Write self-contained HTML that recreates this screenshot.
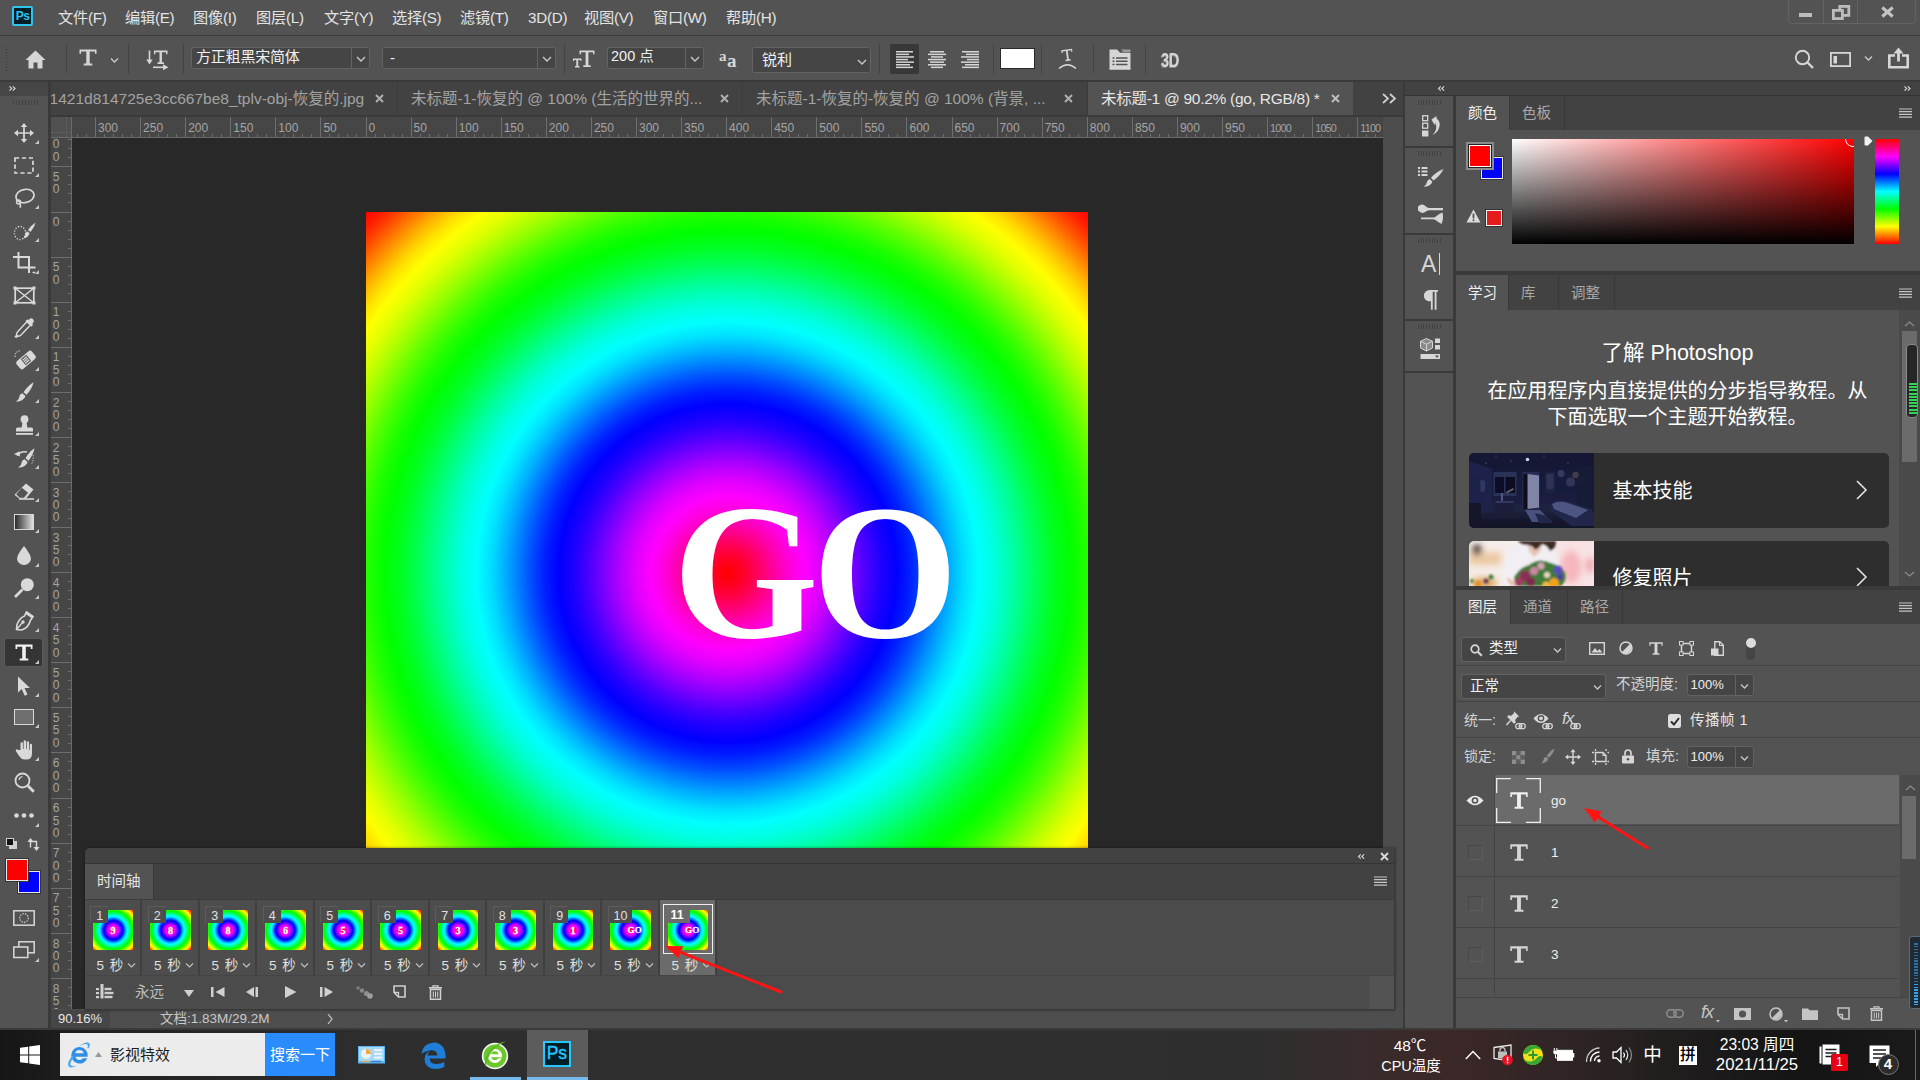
<!DOCTYPE html>
<html lang="zh-CN"><head><meta charset="utf-8"><title>Photoshop</title>
<style>
html,body{margin:0;padding:0;}
body{width:1920px;height:1080px;position:relative;overflow:hidden;background:#535353;
 font-family:"Liberation Sans","Noto Sans CJK SC",sans-serif;font-size:15px;color:#ddd;}
body div,body svg,body span.a{position:absolute;box-sizing:border-box;}
.t{white-space:nowrap;}
svg{overflow:visible;}
</style></head>
<body>
<!-- p_top -->
<div style="left:0px;top:0px;width:1920px;height:35px;background:#535353;"></div>
<div style="left:0px;top:35px;width:1920px;height:1px;background:#3d3d3d;"></div>
<div style="left:12px;top:6px;width:21px;height:20px;background:#001e26;border:2px solid #2fc3ee;border-radius:2px;"><div class="t" style="left:0;top:0;width:17px;height:16px;line-height:16px;text-align:center;font-size:12px;font-weight:bold;color:#2fc3ee;letter-spacing:-0.5px">Ps</div></div>
<div class="t" style="left:58px;top:6.5px;font-size:15.2px;line-height:21px;color:#e4e4e4;letter-spacing:-0.25px;">文件(F)</div>
<div class="t" style="left:125px;top:6.5px;font-size:15.2px;line-height:21px;color:#e4e4e4;letter-spacing:-0.25px;">编辑(E)</div>
<div class="t" style="left:193px;top:6.5px;font-size:15.2px;line-height:21px;color:#e4e4e4;letter-spacing:-0.25px;">图像(I)</div>
<div class="t" style="left:256px;top:6.5px;font-size:15.2px;line-height:21px;color:#e4e4e4;letter-spacing:-0.25px;">图层(L)</div>
<div class="t" style="left:324px;top:6.5px;font-size:15.2px;line-height:21px;color:#e4e4e4;letter-spacing:-0.25px;">文字(Y)</div>
<div class="t" style="left:392px;top:6.5px;font-size:15.2px;line-height:21px;color:#e4e4e4;letter-spacing:-0.25px;">选择(S)</div>
<div class="t" style="left:460px;top:6.5px;font-size:15.2px;line-height:21px;color:#e4e4e4;letter-spacing:-0.25px;">滤镜(T)</div>
<div class="t" style="left:528px;top:6.5px;font-size:15.2px;line-height:21px;color:#e4e4e4;letter-spacing:-0.25px;">3D(D)</div>
<div class="t" style="left:584px;top:6.5px;font-size:15.2px;line-height:21px;color:#e4e4e4;letter-spacing:-0.25px;">视图(V)</div>
<div class="t" style="left:653px;top:6.5px;font-size:15.2px;line-height:21px;color:#e4e4e4;letter-spacing:-0.25px;">窗口(W)</div>
<div class="t" style="left:726px;top:6.5px;font-size:15.2px;line-height:21px;color:#e4e4e4;letter-spacing:-0.25px;">帮助(H)</div>
<div style="left:1788px;top:-2px;width:128px;height:26px;border:1px solid #636363;border-radius:0 0 4px 4px;"></div>
<div style="left:1823px;top:0px;width:1px;height:23px;background:#636363;"></div>
<div style="left:1857px;top:0px;width:1px;height:23px;background:#636363;"></div>
<div style="left:1799px;top:13px;width:13px;height:4px;background:#bcbcbc;"></div>
<svg style="left:1832px;top:5px;" width="18" height="15" viewBox="0 0 18 15"><rect x="7.800" y="1.400" width="9" height="9" fill="none" stroke="#bcbcbc" stroke-width="2.800"/><rect x="1.400" y="5.400" width="9" height="8.200" fill="#535353" stroke="#bcbcbc" stroke-width="2.800"/></svg>
<svg style="left:1881px;top:7px;" width="13" height="10" viewBox="0 0 13 10"><path d="M1.300 0.500l10.400 9M11.700 0.500l-10.400 9" stroke="#c4c4c4" stroke-width="3"/></svg>
<div style="left:0px;top:36px;width:1920px;height:44px;background:#535353;"></div>
<div style="left:0px;top:80px;width:1920px;height:2px;background:#3a3a3a;"></div>
<!-- p_opt -->
<div style="left:6px;top:46px;width:1px;height:1px;background:#3a3a3a;"></div>
<div style="left:6px;top:49px;width:1px;height:1px;background:#3a3a3a;"></div>
<div style="left:6px;top:52px;width:1px;height:1px;background:#3a3a3a;"></div>
<div style="left:6px;top:55px;width:1px;height:1px;background:#3a3a3a;"></div>
<div style="left:6px;top:58px;width:1px;height:1px;background:#3a3a3a;"></div>
<div style="left:6px;top:61px;width:1px;height:1px;background:#3a3a3a;"></div>
<div style="left:6px;top:64px;width:1px;height:1px;background:#3a3a3a;"></div>
<div style="left:6px;top:67px;width:1px;height:1px;background:#3a3a3a;"></div>
<div style="left:6px;top:70px;width:1px;height:1px;background:#3a3a3a;"></div>
<svg style="left:25px;top:50px;" width="21" height="19" viewBox="0 0 21 19"><path d="M10.5 0.5L0.5 10h3v8.5h5v-6h4v6h5V10h3z" fill="#d6d6d6"/></svg>
<div style="left:66px;top:44px;width:1px;height:30px;background:#434343;"></div>
<svg style="left:79px;top:49px;" width="18" height="17" viewBox="0 0 18 17"><path d="M0.5 0.5h17v4.3h-1.6v-2.2h-5.2v11.9h2.6v1.9h-8.6v-1.9h2.6V2.6H2.1v2.2H0.5z" fill="#d6d6d6"/></svg>
<svg style="left:109.5px;top:56.5px;" width="9.0" height="7.0" viewBox="0 0 9.0 7.0"><path d="M1 1.5l3.5 3.5l3.5 -3.5" fill="none" stroke="#c8c8c8" stroke-width="1.4"/></svg>
<div style="left:128px;top:44px;width:1px;height:30px;background:#434343;"></div>
<svg style="left:146px;top:50px;" width="23" height="20" viewBox="0 0 23 20"><path d="M3.500 0.500v12" stroke="#d6d6d6" stroke-width="1.600"/><path d="M0.300 9.500l3.200 5l3.200-5z" fill="#d6d6d6"/><path d="M8 0.500h13.500v3.800h-1.400v-2h-4.200v10h2v1.600h-6.400v-1.600h2v-10h-4.200v2H8z" fill="#d6d6d6"/><path d="M7 17.300h11" stroke="#d6d6d6" stroke-width="1.600"/><path d="M17 14.300l5.500 3l-5.500 3z" fill="#d6d6d6"/></svg>
<div style="left:183px;top:44px;width:1px;height:30px;background:#434343;"></div>
<div style="left:191px;top:47px;width:179px;height:22px;background:#454545;border:1px solid #636363;border-radius:3px;"></div>
<div style="left:351px;top:48px;width:1px;height:20px;background:#636363;"></div>
<svg style="left:355.5px;top:55.0px;" width="10" height="8" viewBox="0 0 10 8"><path d="M1 2l4 4l4 -4" fill="none" stroke="#c8c8c8" stroke-width="1.4"/></svg>
<div class="t" style="left:196px;top:45.8px;font-size:15px;line-height:21px;color:#f0f0f0;letter-spacing:-0.200px;">方正粗黑宋简体</div>
<div style="left:382px;top:47px;width:174px;height:22px;background:#454545;border:1px solid #636363;border-radius:3px;"></div>
<div style="left:537px;top:48px;width:1px;height:20px;background:#636363;"></div>
<svg style="left:541.5px;top:55.0px;" width="10" height="8" viewBox="0 0 10 8"><path d="M1 2l4 4l4 -4" fill="none" stroke="#c8c8c8" stroke-width="1.4"/></svg>
<div class="t" style="left:390px;top:46.5px;font-size:15px;line-height:21px;color:#f0f0f0;">-</div>
<div style="left:564px;top:44px;width:1px;height:30px;background:#434343;"></div>
<svg style="left:573px;top:50px;" width="22" height="18" viewBox="0 0 22 18"><path d="M6.5 0.5h15v3.8h-1.5v-2h-4.6v12.9h2.3v1.8h-7.4v-1.8h2.3V2.3H8v2H6.5z" fill="#d6d6d6"/><path d="M0 8.5h8.5v2.6h-1.1v-1.2H5.2v6.2h1.3V17.5H2v-1.4h1.3V9.9H1.1v1.2H0z" fill="#d6d6d6"/></svg>
<div style="left:607px;top:47px;width:97px;height:22px;background:#454545;border:1px solid #636363;border-radius:3px;"></div>
<div style="left:685px;top:48px;width:1px;height:20px;background:#636363;"></div>
<svg style="left:689.5px;top:55.0px;" width="10" height="8" viewBox="0 0 10 8"><path d="M1 2l4 4l4 -4" fill="none" stroke="#c8c8c8" stroke-width="1.4"/></svg>
<div class="t" style="left:611px;top:46.3px;font-size:14.5px;line-height:20px;color:#f0f0f0;">200 点</div>
<div class="t" style="left:719px;top:45.5px;font-size:15px;line-height:21px;color:#d6d6d6;font-family:'Liberation Serif',serif;font-weight:bold;">a</div>
<div class="t" style="left:727px;top:46.5px;font-size:19px;line-height:27px;color:#d6d6d6;font-family:'Liberation Serif',serif;font-weight:bold;">a</div>
<div style="left:752px;top:47px;width:119px;height:26px;background:#454545;border:1px solid #636363;border-radius:3px;"></div>
<div class="t" style="left:762px;top:48.5px;font-size:15px;line-height:21px;color:#f0f0f0;">锐利</div>
<svg style="left:857px;top:58px;" width="10" height="8" viewBox="0 0 10 8"><path d="M1 2l4 4l4 -4" fill="none" stroke="#c8c8c8" stroke-width="1.4"/></svg>
<div style="left:879px;top:44px;width:1px;height:30px;background:#434343;"></div>
<div style="left:890px;top:44px;width:29px;height:30px;background:#383838;border-radius:2px;"></div>
<svg style="left:896px;top:51px;" width="18" height="20" viewBox="0 0 18 20"><rect x="0" y="0.0" width="17" height="1.500" fill="#d6d6d6"/><rect x="0" y="2.6" width="13" height="1.500" fill="#d6d6d6"/><rect x="0" y="5.2" width="18" height="1.500" fill="#d6d6d6"/><rect x="0" y="7.800000000000001" width="12" height="1.500" fill="#d6d6d6"/><rect x="0" y="10.4" width="18" height="1.500" fill="#d6d6d6"/><rect x="0" y="13.0" width="14" height="1.500" fill="#d6d6d6"/><rect x="0" y="15.600000000000001" width="17" height="1.500" fill="#d6d6d6"/></svg>
<svg style="left:928px;top:51px;" width="18" height="20" viewBox="0 0 18 20"><rect x="2.0" y="0.0" width="14" height="1.500" fill="#d6d6d6"/><rect x="0.0" y="2.6" width="18" height="1.500" fill="#d6d6d6"/><rect x="3.0" y="5.2" width="12" height="1.500" fill="#d6d6d6"/><rect x="0.0" y="7.800000000000001" width="18" height="1.500" fill="#d6d6d6"/><rect x="2.0" y="10.4" width="14" height="1.500" fill="#d6d6d6"/><rect x="0.0" y="13.0" width="18" height="1.500" fill="#d6d6d6"/><rect x="3.0" y="15.600000000000001" width="12" height="1.500" fill="#d6d6d6"/></svg>
<svg style="left:961px;top:51px;" width="18" height="20" viewBox="0 0 18 20"><rect x="1" y="0.0" width="17" height="1.500" fill="#d6d6d6"/><rect x="5" y="2.6" width="13" height="1.500" fill="#d6d6d6"/><rect x="0" y="5.2" width="18" height="1.500" fill="#d6d6d6"/><rect x="6" y="7.800000000000001" width="12" height="1.500" fill="#d6d6d6"/><rect x="0" y="10.4" width="18" height="1.500" fill="#d6d6d6"/><rect x="4" y="13.0" width="14" height="1.500" fill="#d6d6d6"/><rect x="1" y="15.600000000000001" width="17" height="1.500" fill="#d6d6d6"/></svg>
<div style="left:993px;top:44px;width:1px;height:30px;background:#434343;"></div>
<div style="left:1000px;top:48px;width:35px;height:21px;background:#ffffff;border:1px solid #2a2a2a;"></div>
<div style="left:1041px;top:44px;width:1px;height:30px;background:#434343;"></div>
<svg style="left:1058px;top:48px;" width="19" height="22" viewBox="0 0 19 22"><g transform="rotate(-8 9.500 8)"><path d="M4 1.500h11v2.800h-1.200v-1.400h-3.400v8.600h1.700v1.400h-5.200v-1.400h1.700v-8.600h-3.400v1.400H4z" fill="#d6d6d6"/></g><path d="M1 20.500q8.500-7.500 17 0" fill="none" stroke="#d6d6d6" stroke-width="1.500"/></svg>
<div style="left:1093px;top:44px;width:1px;height:30px;background:#434343;"></div>
<svg style="left:1109px;top:49px;" width="22" height="21" viewBox="0 0 22 21"><path d="M0.500 0.500h7.500l3 3.200h10.500v17h-21z" fill="#d6d6d6"/><path d="M12 0.500h9.500v2.500h-7.200z" fill="#9a9a9a"/><path d="M7 9h11.500M7 12.300h11.500M7 15.600h11.500" stroke="#535353" stroke-width="1.500"/><path d="M3.500 9h2M3.500 12.300h2M3.500 15.600h2" stroke="#535353" stroke-width="1.500"/></svg>
<div style="left:1145px;top:44px;width:1px;height:30px;background:#434343;"></div>
<div class="t" style="left:1161px;top:44.5px;font-size:20.5px;line-height:29px;color:#d6d6d6;font-weight:bold;letter-spacing:-0.500px;transform:scaleX(0.720);transform-origin:left center;text-shadow:-1px 1px 0 #8a8a8a;">3D</div>
<svg style="left:1794px;top:49px;" width="20" height="20" viewBox="0 0 20 20"><circle cx="8.5" cy="8.5" r="6.7" fill="none" stroke="#d6d6d6" stroke-width="1.9"/><path d="M13.5 13.5l5.5 5.5" stroke="#d6d6d6" stroke-width="2.4"/></svg>
<svg style="left:1830px;top:52px;" width="21" height="15" viewBox="0 0 21 15"><rect x="0.9" y="0.9" width="19.2" height="13.2" fill="none" stroke="#d6d6d6" stroke-width="1.8"/><rect x="3.5" y="4" width="3.5" height="7.5" fill="#d6d6d6"/></svg>
<svg style="left:1863.5px;top:54.5px;" width="9.0" height="7.0" viewBox="0 0 9.0 7.0"><path d="M1 1.5l3.5 3.5l3.5 -3.5" fill="none" stroke="#c8c8c8" stroke-width="1.4"/></svg>
<svg style="left:1888px;top:47px;" width="21" height="22" viewBox="0 0 21 22"><path d="M7 8.500h-5.700v11.700h18.400v-11.700h-5.700" fill="none" stroke="#d6d6d6" stroke-width="2.600"/><path d="M10.500 14.500V5" stroke="#d6d6d6" stroke-width="2.800"/><path d="M5.500 6.500l5-6l5 6z" fill="#d6d6d6"/></svg>
<!-- p_tabs -->
<div style="left:51px;top:82px;width:1352px;height:35px;background:#424242;"></div>
<div style="left:51px;top:82px;width:347px;height:35px;overflow:hidden;"><div class="t" style="left:-10px;top:5.5px;font-size:15.5px;line-height:22px;color:#a3a3a3;">01421d814725e3cc667be8_tplv-obj-恢复的.jpg</div>
</div>
<svg style="left:374.5px;top:94.0px;" width="9" height="9" viewBox="0 0 9 9"><path d="M1 1l7 7M8 1l-7 7" stroke="#b0b0b0" stroke-width="1.9"/></svg>
<div style="left:397px;top:83px;width:1px;height:33px;background:#3a3a3a;"></div>
<div class="t" style="left:411px;top:87.5px;font-size:15.5px;line-height:22px;color:#a3a3a3;">未标题-1-恢复的 @ 100% (生活的世界的...</div>
<svg style="left:719.5px;top:94.0px;" width="9" height="9" viewBox="0 0 9 9"><path d="M1 1l7 7M8 1l-7 7" stroke="#b0b0b0" stroke-width="1.9"/></svg>
<div style="left:742px;top:83px;width:1px;height:33px;background:#3a3a3a;"></div>
<div class="t" style="left:756px;top:87.5px;font-size:15.5px;line-height:22px;color:#a3a3a3;">未标题-1-恢复的-恢复的 @ 100% (背景, ...</div>
<svg style="left:1064.0px;top:94.0px;" width="9" height="9" viewBox="0 0 9 9"><path d="M1 1l7 7M8 1l-7 7" stroke="#b0b0b0" stroke-width="1.9"/></svg>
<div style="left:1087px;top:83px;width:1px;height:33px;background:#3a3a3a;"></div>
<div style="left:1088px;top:82px;width:265px;height:34px;background:#535353;"></div>
<div class="t" style="left:1101px;top:87.5px;font-size:15.5px;line-height:22px;color:#e6e6e6;letter-spacing:-0.27px;">未标题-1 @ 90.2% (go, RGB/8) *</div>
<svg style="left:1330.5px;top:94.0px;" width="9" height="9" viewBox="0 0 9 9"><path d="M1 1l7 7M8 1l-7 7" stroke="#c0c0c0" stroke-width="1.9"/></svg>
<svg style="left:1382px;top:93px;" width="15" height="11" viewBox="0 0 15 11"><path d="M1 1l5 4.5l-5 4.5M8 1l5 4.5l-5 4.5" fill="none" stroke="#d0d0d0" stroke-width="1.7"/></svg>
<!-- p_left -->
<div style="left:0px;top:82px;width:48px;height:946px;background:#535353;"></div>
<div style="left:0px;top:82px;width:48px;height:14px;background:#464646;"></div>
<div style="left:48px;top:82px;width:3px;height:946px;background:#3a3a3a;"></div>
<svg style="left:9px;top:85.5px;" width="7" height="5" viewBox="0 0 7 5"><path d="M0.5 0.3l2.300 2.200l-2.300 2.200M3.800 0.300l2.300 2.200l-2.300 2.200" fill="none" stroke="#d8d8d8" stroke-width="1.100"/></svg>
<div style="left:13px;top:100px;width:1px;height:5px;background:#424242;"></div>
<div style="left:16px;top:100px;width:1px;height:5px;background:#424242;"></div>
<div style="left:19px;top:100px;width:1px;height:5px;background:#424242;"></div>
<div style="left:22px;top:100px;width:1px;height:5px;background:#424242;"></div>
<div style="left:25px;top:100px;width:1px;height:5px;background:#424242;"></div>
<div style="left:28px;top:100px;width:1px;height:5px;background:#424242;"></div>
<div style="left:31px;top:100px;width:1px;height:5px;background:#424242;"></div>
<div style="left:34px;top:100px;width:1px;height:5px;background:#424242;"></div>
<div style="left:37px;top:100px;width:1px;height:5px;background:#424242;"></div>
<svg style="left:14.0px;top:123.0px;" width="20" height="20" viewBox="0 0 20 20"><path d="M10 1v18M1 10h18" stroke="#d9d9d9" fill="none" stroke-width="1.7"/><path d="M10 0l3.2 4h-6.4zM10 20l3.2-4h-6.4zM0 10l4-3.2v6.4zM20 10l-4-3.2v6.4z" fill="#d9d9d9"/></svg>
<svg style="left:35px;top:140px;" width="4" height="4" viewBox="0 0 4 4"><path d="M4 0v4h-4z" fill="#c8c8c8"/></svg>
<svg style="left:14.0px;top:157.0px;" width="20" height="17" viewBox="0 0 20 17"><rect x="1" y="1" width="18" height="15" stroke="#d9d9d9" fill="none" stroke-width="1.7" stroke-dasharray="4.2 2.7"/></svg>
<svg style="left:35px;top:172.5px;" width="4" height="4" viewBox="0 0 4 4"><path d="M4 0v4h-4z" fill="#c8c8c8"/></svg>
<svg style="left:13.5px;top:188.0px;" width="21" height="20" viewBox="0 0 21 20"><ellipse cx="11" cy="8" rx="9.2" ry="6.6" stroke="#d9d9d9" fill="none" stroke-width="1.7" transform="rotate(-12 11 8)"/><circle cx="4.5" cy="14" r="2" stroke="#d9d9d9" fill="none" stroke-width="1.4"/><path d="M5.5 15.8q2 2 0.3 4" stroke="#d9d9d9" fill="none" stroke-width="1.4"/></svg>
<svg style="left:35px;top:205px;" width="4" height="4" viewBox="0 0 4 4"><path d="M4 0v4h-4z" fill="#c8c8c8"/></svg>
<svg style="left:12.5px;top:221.5px;" width="23" height="19" viewBox="0 0 23 19"><ellipse cx="7" cy="11" rx="5.6" ry="6.6" stroke="#d9d9d9" fill="none" stroke-width="1.3" stroke-dasharray="1.3 1.6"/><path d="M22.5 0.5q-1 5-5 9.5l-2.5-2q3.5-5 7.5-7.5z" fill="#d9d9d9"/><path d="M14 9.2l2.6 2.1q-1.5 5-6.6 5.2q2.2-1.7 2.2-3.8q0-2.3 1.8-3.5z" fill="#d9d9d9"/></svg>
<svg style="left:35px;top:238px;" width="4" height="4" viewBox="0 0 4 4"><path d="M4 0v4h-4z" fill="#c8c8c8"/></svg>
<svg style="left:12.5px;top:252.0px;" width="23" height="21" viewBox="0 0 23 21"><path d="M5.5 0v15.5h17M0 5h16v12" stroke="#d9d9d9" fill="none" stroke-width="2"/><path d="M16 17v4" stroke="#d9d9d9" fill="none" stroke-width="2"/><path d="M19.5 20.5h3" stroke="#d9d9d9" fill="none" stroke-width="1.5"/></svg>
<svg style="left:35px;top:269.5px;" width="4" height="4" viewBox="0 0 4 4"><path d="M4 0v4h-4z" fill="#c8c8c8"/></svg>
<svg style="left:13.5px;top:287.0px;" width="21" height="17" viewBox="0 0 21 17"><rect x="1.2" y="1.2" width="18.6" height="14.6" stroke="#d9d9d9" fill="none" stroke-width="1.7"/><path d="M1 1l19 15M20 1l-19 15" stroke="#d9d9d9" fill="none" stroke-width="1.5"/><rect x="-0.5" y="-0.5" width="3" height="3" fill="#d9d9d9"/><rect x="18.5" y="-0.5" width="3" height="3" fill="#d9d9d9"/><rect x="-0.5" y="14.5" width="3" height="3" fill="#d9d9d9"/><rect x="18.5" y="14.5" width="3" height="3" fill="#d9d9d9"/></svg>
<svg style="left:14.5px;top:317.5px;" width="19" height="20" viewBox="0 0 19 20"><path d="M12 3.5l3.5 3.5l-9.5 10q-1.5 1.5-3.5 1l-1.3 1.3l-0.8-0.8l1.3-1.3q-0.6-2 1-3.5z" stroke="#d9d9d9" fill="none" stroke-width="1.5"/><path d="M10.5 3l1.8-1.8l1 1l1.2-1.2q2-1.4 3.6 0.2q1.5 1.7 0.2 3.5l-1.2 1.2l1 1l-1.8 1.8z" fill="#d9d9d9"/></svg>
<svg style="left:35px;top:334.5px;" width="4" height="4" viewBox="0 0 4 4"><path d="M4 0v4h-4z" fill="#c8c8c8"/></svg>
<svg style="left:13.5px;top:349.0px;" width="21" height="21" viewBox="0 0 21 21"><g transform="rotate(-40 12 11)"><rect x="2" y="6" width="20" height="10" rx="2.5" fill="#d9d9d9"/><rect x="8.5" y="7.2" width="7" height="7.6" fill="#535353"/><g fill="#d9d9d9"><circle cx="10.2" cy="9" r="0.9"/><circle cx="12" cy="9" r="0.9"/><circle cx="13.8" cy="9" r="0.9"/><circle cx="10.2" cy="11" r="0.9"/><circle cx="12" cy="11" r="0.9"/><circle cx="13.8" cy="11" r="0.9"/><circle cx="10.2" cy="13" r="0.9"/><circle cx="12" cy="13" r="0.9"/><circle cx="13.8" cy="13" r="0.9"/></g></g><path d="M1 8q0-6 6-6.5" stroke="#d9d9d9" fill="none" stroke-width="1.1" stroke-dasharray="1.2 1.3"/></svg>
<svg style="left:35px;top:366.5px;" width="4" height="4" viewBox="0 0 4 4"><path d="M4 0v4h-4z" fill="#c8c8c8"/></svg>
<svg style="left:14.5px;top:382.0px;" width="19" height="20" viewBox="0 0 19 20"><path d="M18.5 0.3q-1 6-7 12.5l-3-2.6q5-7 10-9.9z" fill="#d9d9d9"/><path d="M7.3 11.3l3.2 2.7q-1.5 5.3-9.5 5.7q3.2-2 3.3-4.6q0.2-3 3-3.8z" fill="#d9d9d9"/></svg>
<svg style="left:35px;top:399px;" width="4" height="4" viewBox="0 0 4 4"><path d="M4 0v4h-4z" fill="#c8c8c8"/></svg>
<svg style="left:15.5px;top:415.0px;" width="17" height="20" viewBox="0 0 17 20"><circle cx="8.5" cy="4.2" r="3.9" fill="#d9d9d9"/><path d="M6.5 7h4l0.8 5.5h4.2q1.5 0 1.5 1.5v2.5h-17V14q0-1.5 1.5-1.5h4.2z" fill="#d9d9d9"/><rect x="0" y="18" width="17" height="1.8" fill="#d9d9d9"/></svg>
<svg style="left:35px;top:432px;" width="4" height="4" viewBox="0 0 4 4"><path d="M4 0v4h-4z" fill="#c8c8c8"/></svg>
<svg style="left:13.5px;top:448.0px;" width="21" height="20" viewBox="0 0 21 20"><path d="M20.5 0.3q-1 6-6 12.5l-3-2.6q4-7 9-9.9z" fill="#d9d9d9"/><path d="M10.5 11.3l3.2 2.7q-1.5 5.3-9.5 5.7q3.2-2 3.3-4.6q0.2-3 3-3.8z" fill="#d9d9d9"/><path d="M3 7.5q4-5 10-3.5" stroke="#d9d9d9" fill="none" stroke-width="1.5"/><path d="M0 6l5.5-2.8l0.5 5.3z" fill="#d9d9d9"/><path d="M19 7q1 5-1.5 9" stroke="#d9d9d9" fill="none" stroke-width="1" stroke-dasharray="1.2 1.3"/></svg>
<svg style="left:35px;top:465px;" width="4" height="4" viewBox="0 0 4 4"><path d="M4 0v4h-4z" fill="#c8c8c8"/></svg>
<svg style="left:14.0px;top:482.5px;" width="20" height="17" viewBox="0 0 20 17"><path d="M12 0.5l7.5 6l-7.5 9h-7l-4.5-3.8z" fill="#d9d9d9"/><path d="M2.2 11.3l5.6-6.6l6.3 5l-4.2 5h-4.3z" fill="#535353"/><path d="M5 16h15" stroke="#d9d9d9" fill="none" stroke-width="1.6"/></svg>
<svg style="left:35px;top:498px;" width="4" height="4" viewBox="0 0 4 4"><path d="M4 0v4h-4z" fill="#c8c8c8"/></svg>
<div style="left:14px;top:514px;width:20px;height:16px;border:1.5px solid #d9d9d9;background:linear-gradient(90deg,#2a2a2a,#e0e0e0);"></div><svg style="left:35px;top:529px;" width="4" height="4" viewBox="0 0 4 4"><path d="M4 0v4h-4z" fill="#c8c8c8"/></svg>
<svg style="left:17.0px;top:546.0px;" width="14" height="19" viewBox="0 0 14 19"><path d="M7 0q7 9 7 12.5a7 6.5 0 0 1-14 0q0-3.500 7-12.5z" fill="#d9d9d9"/></svg>
<svg style="left:35px;top:562.5px;" width="4" height="4" viewBox="0 0 4 4"><path d="M4 0v4h-4z" fill="#c8c8c8"/></svg>
<svg style="left:14.0px;top:577.5px;" width="20" height="20" viewBox="0 0 20 20"><circle cx="13.3" cy="6.7" r="6.5" fill="#d9d9d9"/><path d="M8.5 11.5l-7.500 7.500" stroke="#d9d9d9" fill="none" stroke-width="2.6"/></svg>
<svg style="left:35px;top:594.5px;" width="4" height="4" viewBox="0 0 4 4"><path d="M4 0v4h-4z" fill="#c8c8c8"/></svg>
<svg style="left:14.5px;top:610.5px;" width="19" height="20" viewBox="0 0 19 20"><path d="M11.5 1l6.5 4.500l-2.700 4q-1.500 7-8.500 9.500l-5.300-0.500l0.500-5q3-7 7.500-8.500z" stroke="#d9d9d9" fill="none" stroke-width="1.6"/><path d="M1.500 18.500l6-7" stroke="#d9d9d9" fill="none" stroke-width="1.3"/><circle cx="8" cy="11" r="1.700" fill="#d9d9d9"/><path d="M10.500 1.500l7.500 5" stroke="#d9d9d9" fill="none" stroke-width="2.600"/></svg>
<svg style="left:35px;top:627.5px;" width="4" height="4" viewBox="0 0 4 4"><path d="M4 0v4h-4z" fill="#c8c8c8"/></svg>
<div style="left:4px;top:638px;width:39px;height:29px;background:#353535;border-radius:3px;border:1px solid #5a5a5a;"></div>
<svg style="left:15.0px;top:644.0px;" width="18" height="17" viewBox="0 0 18 17"><path d="M0.5 0.5h17v4.5h-1.700v-2.300h-5v11.700h2.500v2h-8.600v-2h2.500V2.700h-5v2.300H0.500z" fill="#f0f0f0"/></svg>
<svg style="left:35px;top:659.5px;" width="4" height="4" viewBox="0 0 4 4"><path d="M4 0v4h-4z" fill="#c8c8c8"/></svg>
<svg style="left:17.0px;top:675.5px;" width="14" height="20" viewBox="0 0 14 20"><path d="M1 0.500l12 11.500h-5.500l3 6.500l-2.800 1.200l-3-6.700l-3.700 3.500z" fill="#d9d9d9"/></svg>
<svg style="left:35px;top:692.5px;" width="4" height="4" viewBox="0 0 4 4"><path d="M4 0v4h-4z" fill="#c8c8c8"/></svg>
<div style="left:14px;top:709px;width:20px;height:16px;border:1.5px solid #d9d9d9;background:#6f6f6f;"></div><svg style="left:35px;top:724px;" width="4" height="4" viewBox="0 0 4 4"><path d="M4 0v4h-4z" fill="#c8c8c8"/></svg>
<svg style="left:14.5px;top:740.0px;" width="19" height="20" viewBox="0 0 19 20"><path d="M5.500 10V3.500q0-1.300 1.200-1.300t1.200 1.300V9h0.700V1.500q0-1.300 1.200-1.300t1.200 1.300V9h0.700V2.500q0-1.300 1.200-1.300t1.200 1.300V10h0.700V5q0-1.200 1.100-1.200t1.100 1.200v8.500q0 6-5.500 6h-2q-3 0-5-3l-3.700-5.500q-0.500-1 0.500-1.600q1-0.500 2 0.500z" fill="#d9d9d9"/></svg>
<svg style="left:35px;top:757px;" width="4" height="4" viewBox="0 0 4 4"><path d="M4 0v4h-4z" fill="#c8c8c8"/></svg>
<svg style="left:13.5px;top:772.0px;" width="21" height="21" viewBox="0 0 21 21"><circle cx="8.500" cy="8.500" r="7" stroke="#d9d9d9" fill="none" stroke-width="1.800"/><path d="M13.800 13.800l6 6" stroke="#d9d9d9" fill="none" stroke-width="2.800"/><path d="M5 8q0.500-3 3.500-3.500" stroke="#d9d9d9" fill="none" stroke-width="1.200"/></svg>
<svg style="left:14.0px;top:813.0px;" width="20" height="5" viewBox="0 0 20 5"><circle cx="2.500" cy="2.500" r="2.300" fill="#d9d9d9"/><circle cx="10" cy="2.500" r="2.300" fill="#d9d9d9"/><circle cx="17.500" cy="2.500" r="2.300" fill="#d9d9d9"/></svg>
<svg style="left:35px;top:822.5px;" width="4" height="4" viewBox="0 0 4 4"><path d="M4 0v4h-4z" fill="#c8c8c8"/></svg>
<div style="left:9px;top:841px;width:8px;height:8px;background:#d0d0d0;"></div>
<div style="left:6px;top:838px;width:8px;height:8px;background:#111;border:1px solid #d0d0d0;"></div>
<svg style="left:27px;top:838px;" width="13" height="13" viewBox="0 0 13 13"><path d="M3.500 1v8.500M3.500 3.500h6v8" fill="none" stroke="#d9d9d9" stroke-width="1.400"/><path d="M0.500 4l3-4l3 4zM6.500 9l3 4l3-4z" fill="#d9d9d9"/></svg>
<div style="left:18px;top:871px;width:22px;height:22px;background:#0000ff;border:1px solid #e8e8e8;box-shadow:0 0 0 1px #333;"></div>
<div style="left:6px;top:859px;width:22px;height:22px;background:#ff0000;border:1px solid #e8e8e8;box-shadow:0 0 0 1px #333;"></div>
<svg style="left:13px;top:910px;" width="22" height="16" viewBox="0 0 22 16"><rect x="0.800" y="0.800" width="20.400" height="14.400" stroke="#d9d9d9" fill="none" stroke-width="1.500"/><circle cx="11" cy="8" r="4.300" stroke="#d9d9d9" fill="none" stroke-width="1.200" stroke-dasharray="1.300 1.300"/></svg>
<svg style="left:13px;top:941px;" width="22" height="18" viewBox="0 0 22 18"><rect x="5.800" y="0.800" width="15.400" height="11" stroke="#d9d9d9" fill="none" stroke-width="1.500"/><rect x="0.800" y="6" width="14" height="10.500" fill="#535353" stroke="#d9d9d9" stroke-width="1.500"/></svg>
<svg style="left:35px;top:958px;" width="4" height="4" viewBox="0 0 4 4"><path d="M4 0v4h-4z" fill="#c8c8c8"/></svg>
<!-- p_canvas -->
<div style="left:1383px;top:117px;width:20px;height:892px;background:#4d4d4d;"></div>
<div style="left:1403px;top:82px;width:2px;height:946px;background:#3a3a3a;"></div>
<div style="left:51px;top:115px;width:1352px;height:2px;background:#3a3a3a;"></div>
<div style="left:72px;top:138px;width:1311px;height:871px;background:#282828;"></div>
<div style="left:366px;top:212px;width:722px;height:797px;overflow:hidden;"><div style="left:0px;top:0px;width:722px;height:722px;background:radial-gradient(circle at 361.5px 361px,#ff0000 0.0px,#ff001f 12.8px,#ff004c 25.6px,#ff0080 38.4px,#ff00b3 51.2px,#ff00e0 64.0px,#ff00ff 76.8px,#e000ff 92.16px,#b300ff 107.52px,#8000ff 122.88px,#4c00ff 138.24px,#1f00ff 153.6px,#0000ff 168.96px,#001fff 182.61px,#004cff 196.27px,#0080ff 209.92px,#00b3ff 223.57px,#00e0ff 237.23px,#00ffff 250.88px,#00ffe0 266.24px,#00ffb3 281.6px,#00ff80 296.96px,#00ff4c 312.32px,#00ff1f 327.68px,#00ff00 343.04px,#1fff00 358.4px,#4cff00 373.76px,#80ff00 389.12px,#b3ff00 404.48px,#e0ff00 419.84px,#ffff00 435.2px,#ffe000 448.0px,#ffb300 460.8px,#ff8000 473.6px,#ff4c00 486.4px,#ff1f00 499.2px,#ff0000 512px);"></div>
<div class="t" style="left:307px;top:240px;font-family:'Liberation Serif','Noto Serif CJK SC',serif;font-weight:bold;font-size:187px;line-height:240px;color:#fff;letter-spacing:-5.9px;transform-origin:0 50%;transform:scaleY(1.03);" id="go">GO</div></div>
<div style="left:51px;top:117px;width:1332px;height:21px;background:#464646;overflow:hidden;border-bottom:1px solid #6a6a6a;"><svg style="left:0;top:0" width="1332" height="21"><path d="M26.50 17v4" stroke="#6e6e6e" stroke-width="1"/><path d="M35.50 17v4" stroke="#6e6e6e" stroke-width="1"/><path d="M44.50 0v21" stroke="#6e6e6e" stroke-width="1"/><path d="M53.50 17v4" stroke="#6e6e6e" stroke-width="1"/><path d="M62.50 17v4" stroke="#6e6e6e" stroke-width="1"/><path d="M71.50 17v4" stroke="#6e6e6e" stroke-width="1"/><path d="M80.50 17v4" stroke="#6e6e6e" stroke-width="1"/><path d="M89.50 0v21" stroke="#6e6e6e" stroke-width="1"/><path d="M98.50 17v4" stroke="#6e6e6e" stroke-width="1"/><path d="M107.50 17v4" stroke="#6e6e6e" stroke-width="1"/><path d="M116.50 17v4" stroke="#6e6e6e" stroke-width="1"/><path d="M125.50 17v4" stroke="#6e6e6e" stroke-width="1"/><path d="M134.50 0v21" stroke="#6e6e6e" stroke-width="1"/><path d="M143.50 17v4" stroke="#6e6e6e" stroke-width="1"/><path d="M152.50 17v4" stroke="#6e6e6e" stroke-width="1"/><path d="M161.50 17v4" stroke="#6e6e6e" stroke-width="1"/><path d="M170.50 17v4" stroke="#6e6e6e" stroke-width="1"/><path d="M179.50 0v21" stroke="#6e6e6e" stroke-width="1"/><path d="M188.50 17v4" stroke="#6e6e6e" stroke-width="1"/><path d="M197.50 17v4" stroke="#6e6e6e" stroke-width="1"/><path d="M206.50 17v4" stroke="#6e6e6e" stroke-width="1"/><path d="M215.50 17v4" stroke="#6e6e6e" stroke-width="1"/><path d="M224.50 0v21" stroke="#6e6e6e" stroke-width="1"/><path d="M233.50 17v4" stroke="#6e6e6e" stroke-width="1"/><path d="M242.50 17v4" stroke="#6e6e6e" stroke-width="1"/><path d="M251.50 17v4" stroke="#6e6e6e" stroke-width="1"/><path d="M260.50 17v4" stroke="#6e6e6e" stroke-width="1"/><path d="M269.50 0v21" stroke="#6e6e6e" stroke-width="1"/><path d="M278.50 17v4" stroke="#6e6e6e" stroke-width="1"/><path d="M287.50 17v4" stroke="#6e6e6e" stroke-width="1"/><path d="M296.50 17v4" stroke="#6e6e6e" stroke-width="1"/><path d="M305.50 17v4" stroke="#6e6e6e" stroke-width="1"/><path d="M315.50 0v21" stroke="#6e6e6e" stroke-width="1"/><path d="M324.50 17v4" stroke="#6e6e6e" stroke-width="1"/><path d="M333.50 17v4" stroke="#6e6e6e" stroke-width="1"/><path d="M342.50 17v4" stroke="#6e6e6e" stroke-width="1"/><path d="M351.50 17v4" stroke="#6e6e6e" stroke-width="1"/><path d="M360.50 0v21" stroke="#6e6e6e" stroke-width="1"/><path d="M369.50 17v4" stroke="#6e6e6e" stroke-width="1"/><path d="M378.50 17v4" stroke="#6e6e6e" stroke-width="1"/><path d="M387.50 17v4" stroke="#6e6e6e" stroke-width="1"/><path d="M396.50 17v4" stroke="#6e6e6e" stroke-width="1"/><path d="M405.50 0v21" stroke="#6e6e6e" stroke-width="1"/><path d="M414.50 17v4" stroke="#6e6e6e" stroke-width="1"/><path d="M423.50 17v4" stroke="#6e6e6e" stroke-width="1"/><path d="M432.50 17v4" stroke="#6e6e6e" stroke-width="1"/><path d="M441.50 17v4" stroke="#6e6e6e" stroke-width="1"/><path d="M450.50 0v21" stroke="#6e6e6e" stroke-width="1"/><path d="M459.50 17v4" stroke="#6e6e6e" stroke-width="1"/><path d="M468.50 17v4" stroke="#6e6e6e" stroke-width="1"/><path d="M477.50 17v4" stroke="#6e6e6e" stroke-width="1"/><path d="M486.50 17v4" stroke="#6e6e6e" stroke-width="1"/><path d="M495.50 0v21" stroke="#6e6e6e" stroke-width="1"/><path d="M504.50 17v4" stroke="#6e6e6e" stroke-width="1"/><path d="M513.50 17v4" stroke="#6e6e6e" stroke-width="1"/><path d="M522.50 17v4" stroke="#6e6e6e" stroke-width="1"/><path d="M531.50 17v4" stroke="#6e6e6e" stroke-width="1"/><path d="M540.50 0v21" stroke="#6e6e6e" stroke-width="1"/><path d="M549.50 17v4" stroke="#6e6e6e" stroke-width="1"/><path d="M558.50 17v4" stroke="#6e6e6e" stroke-width="1"/><path d="M567.50 17v4" stroke="#6e6e6e" stroke-width="1"/><path d="M576.50 17v4" stroke="#6e6e6e" stroke-width="1"/><path d="M585.50 0v21" stroke="#6e6e6e" stroke-width="1"/><path d="M594.50 17v4" stroke="#6e6e6e" stroke-width="1"/><path d="M603.50 17v4" stroke="#6e6e6e" stroke-width="1"/><path d="M612.50 17v4" stroke="#6e6e6e" stroke-width="1"/><path d="M621.50 17v4" stroke="#6e6e6e" stroke-width="1"/><path d="M630.50 0v21" stroke="#6e6e6e" stroke-width="1"/><path d="M639.50 17v4" stroke="#6e6e6e" stroke-width="1"/><path d="M648.50 17v4" stroke="#6e6e6e" stroke-width="1"/><path d="M657.50 17v4" stroke="#6e6e6e" stroke-width="1"/><path d="M666.50 17v4" stroke="#6e6e6e" stroke-width="1"/><path d="M675.50 0v21" stroke="#6e6e6e" stroke-width="1"/><path d="M684.50 17v4" stroke="#6e6e6e" stroke-width="1"/><path d="M693.50 17v4" stroke="#6e6e6e" stroke-width="1"/><path d="M702.50 17v4" stroke="#6e6e6e" stroke-width="1"/><path d="M711.50 17v4" stroke="#6e6e6e" stroke-width="1"/><path d="M720.50 0v21" stroke="#6e6e6e" stroke-width="1"/><path d="M729.50 17v4" stroke="#6e6e6e" stroke-width="1"/><path d="M738.50 17v4" stroke="#6e6e6e" stroke-width="1"/><path d="M747.50 17v4" stroke="#6e6e6e" stroke-width="1"/><path d="M756.50 17v4" stroke="#6e6e6e" stroke-width="1"/><path d="M765.50 0v21" stroke="#6e6e6e" stroke-width="1"/><path d="M774.50 17v4" stroke="#6e6e6e" stroke-width="1"/><path d="M783.50 17v4" stroke="#6e6e6e" stroke-width="1"/><path d="M792.50 17v4" stroke="#6e6e6e" stroke-width="1"/><path d="M801.50 17v4" stroke="#6e6e6e" stroke-width="1"/><path d="M810.50 0v21" stroke="#6e6e6e" stroke-width="1"/><path d="M819.50 17v4" stroke="#6e6e6e" stroke-width="1"/><path d="M828.50 17v4" stroke="#6e6e6e" stroke-width="1"/><path d="M837.50 17v4" stroke="#6e6e6e" stroke-width="1"/><path d="M846.50 17v4" stroke="#6e6e6e" stroke-width="1"/><path d="M855.50 0v21" stroke="#6e6e6e" stroke-width="1"/><path d="M864.50 17v4" stroke="#6e6e6e" stroke-width="1"/><path d="M873.50 17v4" stroke="#6e6e6e" stroke-width="1"/><path d="M883.50 17v4" stroke="#6e6e6e" stroke-width="1"/><path d="M892.50 17v4" stroke="#6e6e6e" stroke-width="1"/><path d="M901.50 0v21" stroke="#6e6e6e" stroke-width="1"/><path d="M910.50 17v4" stroke="#6e6e6e" stroke-width="1"/><path d="M919.50 17v4" stroke="#6e6e6e" stroke-width="1"/><path d="M928.50 17v4" stroke="#6e6e6e" stroke-width="1"/><path d="M937.50 17v4" stroke="#6e6e6e" stroke-width="1"/><path d="M946.50 0v21" stroke="#6e6e6e" stroke-width="1"/><path d="M955.50 17v4" stroke="#6e6e6e" stroke-width="1"/><path d="M964.50 17v4" stroke="#6e6e6e" stroke-width="1"/><path d="M973.50 17v4" stroke="#6e6e6e" stroke-width="1"/><path d="M982.50 17v4" stroke="#6e6e6e" stroke-width="1"/><path d="M991.50 0v21" stroke="#6e6e6e" stroke-width="1"/><path d="M1000.50 17v4" stroke="#6e6e6e" stroke-width="1"/><path d="M1009.50 17v4" stroke="#6e6e6e" stroke-width="1"/><path d="M1018.50 17v4" stroke="#6e6e6e" stroke-width="1"/><path d="M1027.50 17v4" stroke="#6e6e6e" stroke-width="1"/><path d="M1036.50 0v21" stroke="#6e6e6e" stroke-width="1"/><path d="M1045.50 17v4" stroke="#6e6e6e" stroke-width="1"/><path d="M1054.50 17v4" stroke="#6e6e6e" stroke-width="1"/><path d="M1063.50 17v4" stroke="#6e6e6e" stroke-width="1"/><path d="M1072.50 17v4" stroke="#6e6e6e" stroke-width="1"/><path d="M1081.50 0v21" stroke="#6e6e6e" stroke-width="1"/><path d="M1090.50 17v4" stroke="#6e6e6e" stroke-width="1"/><path d="M1099.50 17v4" stroke="#6e6e6e" stroke-width="1"/><path d="M1108.50 17v4" stroke="#6e6e6e" stroke-width="1"/><path d="M1117.50 17v4" stroke="#6e6e6e" stroke-width="1"/><path d="M1126.50 0v21" stroke="#6e6e6e" stroke-width="1"/><path d="M1135.50 17v4" stroke="#6e6e6e" stroke-width="1"/><path d="M1144.50 17v4" stroke="#6e6e6e" stroke-width="1"/><path d="M1153.50 17v4" stroke="#6e6e6e" stroke-width="1"/><path d="M1162.50 17v4" stroke="#6e6e6e" stroke-width="1"/><path d="M1171.50 0v21" stroke="#6e6e6e" stroke-width="1"/><path d="M1180.50 17v4" stroke="#6e6e6e" stroke-width="1"/><path d="M1189.50 17v4" stroke="#6e6e6e" stroke-width="1"/><path d="M1198.50 17v4" stroke="#6e6e6e" stroke-width="1"/><path d="M1207.50 17v4" stroke="#6e6e6e" stroke-width="1"/><path d="M1216.50 0v21" stroke="#6e6e6e" stroke-width="1"/><path d="M1225.50 17v4" stroke="#6e6e6e" stroke-width="1"/><path d="M1234.50 17v4" stroke="#6e6e6e" stroke-width="1"/><path d="M1243.50 17v4" stroke="#6e6e6e" stroke-width="1"/><path d="M1252.50 17v4" stroke="#6e6e6e" stroke-width="1"/><path d="M1261.50 0v21" stroke="#6e6e6e" stroke-width="1"/><path d="M1270.50 17v4" stroke="#6e6e6e" stroke-width="1"/><path d="M1279.50 17v4" stroke="#6e6e6e" stroke-width="1"/><path d="M1288.50 17v4" stroke="#6e6e6e" stroke-width="1"/><path d="M1297.50 17v4" stroke="#6e6e6e" stroke-width="1"/><path d="M1306.50 0v21" stroke="#6e6e6e" stroke-width="1"/><path d="M1315.50 17v4" stroke="#6e6e6e" stroke-width="1"/><path d="M1324.50 17v4" stroke="#6e6e6e" stroke-width="1"/></svg><div class="t" style="left:47.0px;top:4px;font-size:12px;line-height:14px;color:#a4a4a4;">300</div><div class="t" style="left:92.1px;top:4px;font-size:12px;line-height:14px;color:#a4a4a4;">250</div><div class="t" style="left:137.2px;top:4px;font-size:12px;line-height:14px;color:#a4a4a4;">200</div><div class="t" style="left:182.3px;top:4px;font-size:12px;line-height:14px;color:#a4a4a4;">150</div><div class="t" style="left:227.3px;top:4px;font-size:12px;line-height:14px;color:#a4a4a4;">100</div><div class="t" style="left:272.4px;top:4px;font-size:12px;line-height:14px;color:#a4a4a4;">50</div><div class="t" style="left:317.5px;top:4px;font-size:12px;line-height:14px;color:#a4a4a4;">0</div><div class="t" style="left:362.6px;top:4px;font-size:12px;line-height:14px;color:#a4a4a4;">50</div><div class="t" style="left:407.7px;top:4px;font-size:12px;line-height:14px;color:#a4a4a4;">100</div><div class="t" style="left:452.7px;top:4px;font-size:12px;line-height:14px;color:#a4a4a4;">150</div><div class="t" style="left:497.8px;top:4px;font-size:12px;line-height:14px;color:#a4a4a4;">200</div><div class="t" style="left:542.9px;top:4px;font-size:12px;line-height:14px;color:#a4a4a4;">250</div><div class="t" style="left:588.0px;top:4px;font-size:12px;line-height:14px;color:#a4a4a4;">300</div><div class="t" style="left:633.1px;top:4px;font-size:12px;line-height:14px;color:#a4a4a4;">350</div><div class="t" style="left:678.1px;top:4px;font-size:12px;line-height:14px;color:#a4a4a4;">400</div><div class="t" style="left:723.2px;top:4px;font-size:12px;line-height:14px;color:#a4a4a4;">450</div><div class="t" style="left:768.3px;top:4px;font-size:12px;line-height:14px;color:#a4a4a4;">500</div><div class="t" style="left:813.4px;top:4px;font-size:12px;line-height:14px;color:#a4a4a4;">550</div><div class="t" style="left:858.5px;top:4px;font-size:12px;line-height:14px;color:#a4a4a4;">600</div><div class="t" style="left:903.5px;top:4px;font-size:12px;line-height:14px;color:#a4a4a4;">650</div><div class="t" style="left:948.6px;top:4px;font-size:12px;line-height:14px;color:#a4a4a4;">700</div><div class="t" style="left:993.7px;top:4px;font-size:12px;line-height:14px;color:#a4a4a4;">750</div><div class="t" style="left:1038.8px;top:4px;font-size:12px;line-height:14px;color:#a4a4a4;">800</div><div class="t" style="left:1083.9px;top:4px;font-size:12px;line-height:14px;color:#a4a4a4;">850</div><div class="t" style="left:1128.9px;top:4px;font-size:12px;line-height:14px;color:#a4a4a4;">900</div><div class="t" style="left:1174.0px;top:4px;font-size:12px;line-height:14px;color:#a4a4a4;">950</div><div class="t" style="left:1219.1px;top:4px;font-size:10.8px;line-height:14px;color:#a4a4a4;letter-spacing:-0.8px;">1000</div><div class="t" style="left:1264.2px;top:4px;font-size:10.8px;line-height:14px;color:#a4a4a4;letter-spacing:-0.8px;">1050</div><div class="t" style="left:1309.3px;top:4px;font-size:10.8px;line-height:14px;color:#a4a4a4;letter-spacing:-0.8px;">1100</div></div>
<div style="left:51px;top:117px;width:21px;height:21px;background:#505050;border-right:1px solid #6a6a6a;border-bottom:1px solid #6a6a6a;"><div style="left:15px;top:0;width:0;height:20px;border-left:1px dotted #686868"></div><div style="left:0;top:15px;width:20px;height:0;border-top:1px dotted #686868"></div></div>
<div style="left:51px;top:138px;width:21px;height:871px;background:#464646;overflow:hidden;border-right:1px solid #6a6a6a;"><svg style="left:0;top:0" width="21" height="871"><path d="M17 1.50h4" stroke="#6e6e6e" stroke-width="1"/><path d="M17 10.50h4" stroke="#6e6e6e" stroke-width="1"/><path d="M17 19.50h4" stroke="#6e6e6e" stroke-width="1"/><path d="M0 28.50h21" stroke="#6e6e6e" stroke-width="1"/><path d="M17 37.50h4" stroke="#6e6e6e" stroke-width="1"/><path d="M17 46.50h4" stroke="#6e6e6e" stroke-width="1"/><path d="M17 55.50h4" stroke="#6e6e6e" stroke-width="1"/><path d="M17 64.50h4" stroke="#6e6e6e" stroke-width="1"/><path d="M0 74.50h21" stroke="#6e6e6e" stroke-width="1"/><path d="M17 83.50h4" stroke="#6e6e6e" stroke-width="1"/><path d="M17 92.50h4" stroke="#6e6e6e" stroke-width="1"/><path d="M17 101.50h4" stroke="#6e6e6e" stroke-width="1"/><path d="M17 110.50h4" stroke="#6e6e6e" stroke-width="1"/><path d="M0 119.50h21" stroke="#6e6e6e" stroke-width="1"/><path d="M17 128.50h4" stroke="#6e6e6e" stroke-width="1"/><path d="M17 137.50h4" stroke="#6e6e6e" stroke-width="1"/><path d="M17 146.50h4" stroke="#6e6e6e" stroke-width="1"/><path d="M17 155.50h4" stroke="#6e6e6e" stroke-width="1"/><path d="M0 164.50h21" stroke="#6e6e6e" stroke-width="1"/><path d="M17 173.50h4" stroke="#6e6e6e" stroke-width="1"/><path d="M17 182.50h4" stroke="#6e6e6e" stroke-width="1"/><path d="M17 191.50h4" stroke="#6e6e6e" stroke-width="1"/><path d="M17 200.50h4" stroke="#6e6e6e" stroke-width="1"/><path d="M0 209.50h21" stroke="#6e6e6e" stroke-width="1"/><path d="M17 218.50h4" stroke="#6e6e6e" stroke-width="1"/><path d="M17 227.50h4" stroke="#6e6e6e" stroke-width="1"/><path d="M17 236.50h4" stroke="#6e6e6e" stroke-width="1"/><path d="M17 245.50h4" stroke="#6e6e6e" stroke-width="1"/><path d="M0 254.50h21" stroke="#6e6e6e" stroke-width="1"/><path d="M17 263.50h4" stroke="#6e6e6e" stroke-width="1"/><path d="M17 272.50h4" stroke="#6e6e6e" stroke-width="1"/><path d="M17 281.50h4" stroke="#6e6e6e" stroke-width="1"/><path d="M17 290.50h4" stroke="#6e6e6e" stroke-width="1"/><path d="M0 299.50h21" stroke="#6e6e6e" stroke-width="1"/><path d="M17 308.50h4" stroke="#6e6e6e" stroke-width="1"/><path d="M17 317.50h4" stroke="#6e6e6e" stroke-width="1"/><path d="M17 326.50h4" stroke="#6e6e6e" stroke-width="1"/><path d="M17 335.50h4" stroke="#6e6e6e" stroke-width="1"/><path d="M0 344.50h21" stroke="#6e6e6e" stroke-width="1"/><path d="M17 353.50h4" stroke="#6e6e6e" stroke-width="1"/><path d="M17 362.50h4" stroke="#6e6e6e" stroke-width="1"/><path d="M17 371.50h4" stroke="#6e6e6e" stroke-width="1"/><path d="M17 380.50h4" stroke="#6e6e6e" stroke-width="1"/><path d="M0 389.50h21" stroke="#6e6e6e" stroke-width="1"/><path d="M17 398.50h4" stroke="#6e6e6e" stroke-width="1"/><path d="M17 407.50h4" stroke="#6e6e6e" stroke-width="1"/><path d="M17 416.50h4" stroke="#6e6e6e" stroke-width="1"/><path d="M17 425.50h4" stroke="#6e6e6e" stroke-width="1"/><path d="M0 434.50h21" stroke="#6e6e6e" stroke-width="1"/><path d="M17 443.50h4" stroke="#6e6e6e" stroke-width="1"/><path d="M17 452.50h4" stroke="#6e6e6e" stroke-width="1"/><path d="M17 461.50h4" stroke="#6e6e6e" stroke-width="1"/><path d="M17 470.50h4" stroke="#6e6e6e" stroke-width="1"/><path d="M0 479.50h21" stroke="#6e6e6e" stroke-width="1"/><path d="M17 488.50h4" stroke="#6e6e6e" stroke-width="1"/><path d="M17 497.50h4" stroke="#6e6e6e" stroke-width="1"/><path d="M17 506.50h4" stroke="#6e6e6e" stroke-width="1"/><path d="M17 515.50h4" stroke="#6e6e6e" stroke-width="1"/><path d="M0 524.50h21" stroke="#6e6e6e" stroke-width="1"/><path d="M17 533.50h4" stroke="#6e6e6e" stroke-width="1"/><path d="M17 542.50h4" stroke="#6e6e6e" stroke-width="1"/><path d="M17 551.50h4" stroke="#6e6e6e" stroke-width="1"/><path d="M17 560.50h4" stroke="#6e6e6e" stroke-width="1"/><path d="M0 569.50h21" stroke="#6e6e6e" stroke-width="1"/><path d="M17 578.50h4" stroke="#6e6e6e" stroke-width="1"/><path d="M17 587.50h4" stroke="#6e6e6e" stroke-width="1"/><path d="M17 596.50h4" stroke="#6e6e6e" stroke-width="1"/><path d="M17 605.50h4" stroke="#6e6e6e" stroke-width="1"/><path d="M0 614.50h21" stroke="#6e6e6e" stroke-width="1"/><path d="M17 623.50h4" stroke="#6e6e6e" stroke-width="1"/><path d="M17 632.50h4" stroke="#6e6e6e" stroke-width="1"/><path d="M17 642.50h4" stroke="#6e6e6e" stroke-width="1"/><path d="M17 651.50h4" stroke="#6e6e6e" stroke-width="1"/><path d="M0 660.50h21" stroke="#6e6e6e" stroke-width="1"/><path d="M17 669.50h4" stroke="#6e6e6e" stroke-width="1"/><path d="M17 678.50h4" stroke="#6e6e6e" stroke-width="1"/><path d="M17 687.50h4" stroke="#6e6e6e" stroke-width="1"/><path d="M17 696.50h4" stroke="#6e6e6e" stroke-width="1"/><path d="M0 705.50h21" stroke="#6e6e6e" stroke-width="1"/><path d="M17 714.50h4" stroke="#6e6e6e" stroke-width="1"/><path d="M17 723.50h4" stroke="#6e6e6e" stroke-width="1"/><path d="M17 732.50h4" stroke="#6e6e6e" stroke-width="1"/><path d="M17 741.50h4" stroke="#6e6e6e" stroke-width="1"/><path d="M0 750.50h21" stroke="#6e6e6e" stroke-width="1"/><path d="M17 759.50h4" stroke="#6e6e6e" stroke-width="1"/><path d="M17 768.50h4" stroke="#6e6e6e" stroke-width="1"/><path d="M17 777.50h4" stroke="#6e6e6e" stroke-width="1"/><path d="M17 786.50h4" stroke="#6e6e6e" stroke-width="1"/><path d="M0 795.50h21" stroke="#6e6e6e" stroke-width="1"/><path d="M17 804.50h4" stroke="#6e6e6e" stroke-width="1"/><path d="M17 813.50h4" stroke="#6e6e6e" stroke-width="1"/><path d="M17 822.50h4" stroke="#6e6e6e" stroke-width="1"/><path d="M17 831.50h4" stroke="#6e6e6e" stroke-width="1"/><path d="M0 840.50h21" stroke="#6e6e6e" stroke-width="1"/><path d="M17 849.50h4" stroke="#6e6e6e" stroke-width="1"/><path d="M17 858.50h4" stroke="#6e6e6e" stroke-width="1"/><path d="M17 867.50h4" stroke="#6e6e6e" stroke-width="1"/></svg><div class="t" style="left:1px;top:-12.0px;width:8px;text-align:center;font-size:12px;line-height:13px;color:#a4a4a4;">1</div><div class="t" style="left:1px;top:0.3px;width:8px;text-align:center;font-size:12px;line-height:13px;color:#a4a4a4;">0</div><div class="t" style="left:1px;top:12.6px;width:8px;text-align:center;font-size:12px;line-height:13px;color:#a4a4a4;">0</div><div class="t" style="left:1px;top:33.1px;width:8px;text-align:center;font-size:12px;line-height:13px;color:#a4a4a4;">5</div><div class="t" style="left:1px;top:45.4px;width:8px;text-align:center;font-size:12px;line-height:13px;color:#a4a4a4;">0</div><div class="t" style="left:1px;top:78.2px;width:8px;text-align:center;font-size:12px;line-height:13px;color:#a4a4a4;">0</div><div class="t" style="left:1px;top:123.3px;width:8px;text-align:center;font-size:12px;line-height:13px;color:#a4a4a4;">5</div><div class="t" style="left:1px;top:135.6px;width:8px;text-align:center;font-size:12px;line-height:13px;color:#a4a4a4;">0</div><div class="t" style="left:1px;top:168.4px;width:8px;text-align:center;font-size:12px;line-height:13px;color:#a4a4a4;">1</div><div class="t" style="left:1px;top:180.7px;width:8px;text-align:center;font-size:12px;line-height:13px;color:#a4a4a4;">0</div><div class="t" style="left:1px;top:193.0px;width:8px;text-align:center;font-size:12px;line-height:13px;color:#a4a4a4;">0</div><div class="t" style="left:1px;top:213.4px;width:8px;text-align:center;font-size:12px;line-height:13px;color:#a4a4a4;">1</div><div class="t" style="left:1px;top:225.7px;width:8px;text-align:center;font-size:12px;line-height:13px;color:#a4a4a4;">5</div><div class="t" style="left:1px;top:238.0px;width:8px;text-align:center;font-size:12px;line-height:13px;color:#a4a4a4;">0</div><div class="t" style="left:1px;top:258.5px;width:8px;text-align:center;font-size:12px;line-height:13px;color:#a4a4a4;">2</div><div class="t" style="left:1px;top:270.8px;width:8px;text-align:center;font-size:12px;line-height:13px;color:#a4a4a4;">0</div><div class="t" style="left:1px;top:283.1px;width:8px;text-align:center;font-size:12px;line-height:13px;color:#a4a4a4;">0</div><div class="t" style="left:1px;top:303.6px;width:8px;text-align:center;font-size:12px;line-height:13px;color:#a4a4a4;">2</div><div class="t" style="left:1px;top:315.9px;width:8px;text-align:center;font-size:12px;line-height:13px;color:#a4a4a4;">5</div><div class="t" style="left:1px;top:328.2px;width:8px;text-align:center;font-size:12px;line-height:13px;color:#a4a4a4;">0</div><div class="t" style="left:1px;top:348.7px;width:8px;text-align:center;font-size:12px;line-height:13px;color:#a4a4a4;">3</div><div class="t" style="left:1px;top:361.0px;width:8px;text-align:center;font-size:12px;line-height:13px;color:#a4a4a4;">0</div><div class="t" style="left:1px;top:373.3px;width:8px;text-align:center;font-size:12px;line-height:13px;color:#a4a4a4;">0</div><div class="t" style="left:1px;top:393.8px;width:8px;text-align:center;font-size:12px;line-height:13px;color:#a4a4a4;">3</div><div class="t" style="left:1px;top:406.1px;width:8px;text-align:center;font-size:12px;line-height:13px;color:#a4a4a4;">5</div><div class="t" style="left:1px;top:418.4px;width:8px;text-align:center;font-size:12px;line-height:13px;color:#a4a4a4;">0</div><div class="t" style="left:1px;top:438.8px;width:8px;text-align:center;font-size:12px;line-height:13px;color:#a4a4a4;">4</div><div class="t" style="left:1px;top:451.1px;width:8px;text-align:center;font-size:12px;line-height:13px;color:#a4a4a4;">0</div><div class="t" style="left:1px;top:463.4px;width:8px;text-align:center;font-size:12px;line-height:13px;color:#a4a4a4;">0</div><div class="t" style="left:1px;top:483.9px;width:8px;text-align:center;font-size:12px;line-height:13px;color:#a4a4a4;">4</div><div class="t" style="left:1px;top:496.2px;width:8px;text-align:center;font-size:12px;line-height:13px;color:#a4a4a4;">5</div><div class="t" style="left:1px;top:508.5px;width:8px;text-align:center;font-size:12px;line-height:13px;color:#a4a4a4;">0</div><div class="t" style="left:1px;top:529.0px;width:8px;text-align:center;font-size:12px;line-height:13px;color:#a4a4a4;">5</div><div class="t" style="left:1px;top:541.3px;width:8px;text-align:center;font-size:12px;line-height:13px;color:#a4a4a4;">0</div><div class="t" style="left:1px;top:553.6px;width:8px;text-align:center;font-size:12px;line-height:13px;color:#a4a4a4;">0</div><div class="t" style="left:1px;top:574.1px;width:8px;text-align:center;font-size:12px;line-height:13px;color:#a4a4a4;">5</div><div class="t" style="left:1px;top:586.4px;width:8px;text-align:center;font-size:12px;line-height:13px;color:#a4a4a4;">5</div><div class="t" style="left:1px;top:598.7px;width:8px;text-align:center;font-size:12px;line-height:13px;color:#a4a4a4;">0</div><div class="t" style="left:1px;top:619.2px;width:8px;text-align:center;font-size:12px;line-height:13px;color:#a4a4a4;">6</div><div class="t" style="left:1px;top:631.5px;width:8px;text-align:center;font-size:12px;line-height:13px;color:#a4a4a4;">0</div><div class="t" style="left:1px;top:643.8px;width:8px;text-align:center;font-size:12px;line-height:13px;color:#a4a4a4;">0</div><div class="t" style="left:1px;top:664.2px;width:8px;text-align:center;font-size:12px;line-height:13px;color:#a4a4a4;">6</div><div class="t" style="left:1px;top:676.5px;width:8px;text-align:center;font-size:12px;line-height:13px;color:#a4a4a4;">5</div><div class="t" style="left:1px;top:688.8px;width:8px;text-align:center;font-size:12px;line-height:13px;color:#a4a4a4;">0</div><div class="t" style="left:1px;top:709.3px;width:8px;text-align:center;font-size:12px;line-height:13px;color:#a4a4a4;">7</div><div class="t" style="left:1px;top:721.6px;width:8px;text-align:center;font-size:12px;line-height:13px;color:#a4a4a4;">0</div><div class="t" style="left:1px;top:733.9px;width:8px;text-align:center;font-size:12px;line-height:13px;color:#a4a4a4;">0</div><div class="t" style="left:1px;top:754.4px;width:8px;text-align:center;font-size:12px;line-height:13px;color:#a4a4a4;">7</div><div class="t" style="left:1px;top:766.7px;width:8px;text-align:center;font-size:12px;line-height:13px;color:#a4a4a4;">5</div><div class="t" style="left:1px;top:779.0px;width:8px;text-align:center;font-size:12px;line-height:13px;color:#a4a4a4;">0</div><div class="t" style="left:1px;top:799.5px;width:8px;text-align:center;font-size:12px;line-height:13px;color:#a4a4a4;">8</div><div class="t" style="left:1px;top:811.8px;width:8px;text-align:center;font-size:12px;line-height:13px;color:#a4a4a4;">0</div><div class="t" style="left:1px;top:824.1px;width:8px;text-align:center;font-size:12px;line-height:13px;color:#a4a4a4;">0</div><div class="t" style="left:1px;top:844.6px;width:8px;text-align:center;font-size:12px;line-height:13px;color:#a4a4a4;">8</div><div class="t" style="left:1px;top:856.9px;width:8px;text-align:center;font-size:12px;line-height:13px;color:#a4a4a4;">5</div><div class="t" style="left:1px;top:869.2px;width:8px;text-align:center;font-size:12px;line-height:13px;color:#a4a4a4;">0</div><div class="t" style="left:1px;top:889.6px;width:8px;text-align:center;font-size:12px;line-height:13px;color:#a4a4a4;">9</div><div class="t" style="left:1px;top:901.9px;width:8px;text-align:center;font-size:12px;line-height:13px;color:#a4a4a4;">0</div><div class="t" style="left:1px;top:914.2px;width:8px;text-align:center;font-size:12px;line-height:13px;color:#a4a4a4;">0</div></div>
<!-- p_timeline -->
<div style="left:51px;top:1009px;width:1352px;height:19px;background:#4e4e4e;"></div>
<div style="left:51px;top:1010px;width:59px;height:18px;background:#464646;"></div>
<div class="t" style="left:58px;top:1009.5px;font-size:13px;line-height:18px;color:#e8e8e8;">90.16%</div>
<div class="t" style="left:160px;top:1009.0px;font-size:13.5px;line-height:19px;color:#c8c8c8;">文档:1.83M/29.2M</div>
<svg style="left:327px;top:1013px;" width="6" height="12" viewBox="0 0 6 12"><path d="M1 1l4 5l-4 5" fill="none" stroke="#c8c8c8" stroke-width="1.2"/></svg>
<div style="left:85px;top:848px;width:1310px;height:162px;background:#4b4b4b;border-radius:5px 0 0 0;box-shadow:0 0 3px rgba(0,0,0,.5);overflow:hidden;border-right:1px solid #383838;border-bottom:1px solid #383838;"><div style="left:0px;top:0px;width:1310px;height:15px;background:#424242;"></div>
<div style="left:0px;top:15px;width:1310px;height:1px;background:#353535;"></div>
<div style="left:0px;top:16px;width:1310px;height:35px;background:#424242;"></div>
<div style="left:0px;top:16px;width:69px;height:35px;background:#535353;border-right:1px solid #3a3a3a;"></div>
<div style="left:0px;top:51px;width:1310px;height:1px;background:#3c3c3c;"></div>
<div style="left:0px;top:127px;width:1310px;height:1px;background:#454545;"></div>
<div style="left:1284px;top:128px;width:26px;height:34px;background:#535353;"></div>
</div>
<div class="t" style="left:97px;top:871.0px;font-size:14.5px;line-height:20px;color:#e6e6e6;">时间轴</div>
<svg style="left:1358px;top:853.5px;" width="7" height="5" viewBox="0 0 7 5"><path d="M2.800 0.300l-2.300 2.200l2.300 2.200M6.100 0.300l-2.300 2.200l2.300 2.200" fill="none" stroke="#d8d8d8" stroke-width="1.100"/></svg>
<svg style="left:1379.5px;top:851.5px;" width="9" height="9" viewBox="0 0 9 9"><path d="M1 1l7 7M8 1l-7 7" stroke="#d8d8d8" stroke-width="1.9"/></svg>
<svg style="left:1374px;top:876px;" width="13" height="10" viewBox="0 0 13 10"><path d="M0 1h13M0 3.700h13M0 6.400h13M0 9.100h13" stroke="#c4c4c4" stroke-width="1.200"/></svg>
<div style="left:84.5px;top:900px;width:55.5px;height:75px;background:#4d4d4d;"></div>
<div style="left:140.0px;top:900px;width:2.0px;height:75px;background:#404040;"></div>
<div style="left:92.5px;top:910px;width:40.5px;height:40px;background:radial-gradient(circle at 20.2px 20.2px,#ff0000 0.0px,#ff001f 0.72px,#ff004c 1.43px,#ff0080 2.15px,#ff00b3 2.87px,#ff00e0 3.59px,#ff00ff 4.3px,#e000ff 5.17px,#b300ff 6.03px,#8000ff 6.89px,#4c00ff 7.75px,#1f00ff 8.61px,#0000ff 9.47px,#001fff 10.24px,#004cff 11.0px,#0080ff 11.77px,#00b3ff 12.53px,#00e0ff 13.3px,#00ffff 14.06px,#00ffe0 14.92px,#00ffb3 15.79px,#00ff80 16.65px,#00ff4c 17.51px,#00ff1f 18.37px,#00ff00 19.23px,#1fff00 20.09px,#4cff00 20.95px,#80ff00 21.81px,#b3ff00 22.67px,#e0ff00 23.53px,#ffff00 24.39px,#ffe000 25.11px,#ffb300 25.83px,#ff8000 26.55px,#ff4c00 27.26px,#ff1f00 27.98px,#ff0000 28.7px);"><div class="t" style="left:0;top:0;width:41px;height:41px;line-height:41px;text-align:center;font-family:'Liberation Serif',serif;font-weight:bold;font-size:10px;color:#fff;-webkit-text-stroke:0.300px #fff;">9</div></div>
<div style="left:90.0px;top:905.5px;width:18.0px;height:17.0px;background:#4d4d4d;border-top:1px solid #5c5c5c;border-left:1px solid #5c5c5c;"><div class="t" style="left:0;top:0;width:17.5px;line-height:19px;text-align:center;font-size:12.5px;color:#e0e0e0;">1</div></div>
<div class="t" style="left:96.5px;top:955.5px;font-size:13.5px;line-height:19px;color:#e0e0e0;word-spacing:2px;">5 秒</div>
<svg style="left:127.0px;top:961.5px;" width="9.0" height="7.0" viewBox="0 0 9.0 7.0"><path d="M1 1.5l3.5 3.5l3.5 -3.5" fill="none" stroke="#c0c0c0" stroke-width="1.2"/></svg>
<div style="left:142.0px;top:900px;width:55.5px;height:75px;background:#4d4d4d;"></div>
<div style="left:197.5px;top:900px;width:2.0px;height:75px;background:#404040;"></div>
<div style="left:150.0px;top:910px;width:40.5px;height:40px;background:radial-gradient(circle at 20.2px 20.2px,#ff0000 0.0px,#ff001f 0.72px,#ff004c 1.43px,#ff0080 2.15px,#ff00b3 2.87px,#ff00e0 3.59px,#ff00ff 4.3px,#e000ff 5.17px,#b300ff 6.03px,#8000ff 6.89px,#4c00ff 7.75px,#1f00ff 8.61px,#0000ff 9.47px,#001fff 10.24px,#004cff 11.0px,#0080ff 11.77px,#00b3ff 12.53px,#00e0ff 13.3px,#00ffff 14.06px,#00ffe0 14.92px,#00ffb3 15.79px,#00ff80 16.65px,#00ff4c 17.51px,#00ff1f 18.37px,#00ff00 19.23px,#1fff00 20.09px,#4cff00 20.95px,#80ff00 21.81px,#b3ff00 22.67px,#e0ff00 23.53px,#ffff00 24.39px,#ffe000 25.11px,#ffb300 25.83px,#ff8000 26.55px,#ff4c00 27.26px,#ff1f00 27.98px,#ff0000 28.7px);"><div class="t" style="left:0;top:0;width:41px;height:41px;line-height:41px;text-align:center;font-family:'Liberation Serif',serif;font-weight:bold;font-size:10px;color:#fff;-webkit-text-stroke:0.300px #fff;">8</div></div>
<div style="left:147.5px;top:905.5px;width:18.0px;height:17.0px;background:#4d4d4d;border-top:1px solid #5c5c5c;border-left:1px solid #5c5c5c;"><div class="t" style="left:0;top:0;width:17.5px;line-height:19px;text-align:center;font-size:12.5px;color:#e0e0e0;">2</div></div>
<div class="t" style="left:154.0px;top:955.5px;font-size:13.5px;line-height:19px;color:#e0e0e0;word-spacing:2px;">5 秒</div>
<svg style="left:184.5px;top:961.5px;" width="9.0" height="7.0" viewBox="0 0 9.0 7.0"><path d="M1 1.5l3.5 3.5l3.5 -3.5" fill="none" stroke="#c0c0c0" stroke-width="1.2"/></svg>
<div style="left:199.5px;top:900px;width:55.5px;height:75px;background:#4d4d4d;"></div>
<div style="left:255.0px;top:900px;width:2.0px;height:75px;background:#404040;"></div>
<div style="left:207.5px;top:910px;width:40.5px;height:40px;background:radial-gradient(circle at 20.2px 20.2px,#ff0000 0.0px,#ff001f 0.72px,#ff004c 1.43px,#ff0080 2.15px,#ff00b3 2.87px,#ff00e0 3.59px,#ff00ff 4.3px,#e000ff 5.17px,#b300ff 6.03px,#8000ff 6.89px,#4c00ff 7.75px,#1f00ff 8.61px,#0000ff 9.47px,#001fff 10.24px,#004cff 11.0px,#0080ff 11.77px,#00b3ff 12.53px,#00e0ff 13.3px,#00ffff 14.06px,#00ffe0 14.92px,#00ffb3 15.79px,#00ff80 16.65px,#00ff4c 17.51px,#00ff1f 18.37px,#00ff00 19.23px,#1fff00 20.09px,#4cff00 20.95px,#80ff00 21.81px,#b3ff00 22.67px,#e0ff00 23.53px,#ffff00 24.39px,#ffe000 25.11px,#ffb300 25.83px,#ff8000 26.55px,#ff4c00 27.26px,#ff1f00 27.98px,#ff0000 28.7px);"><div class="t" style="left:0;top:0;width:41px;height:41px;line-height:41px;text-align:center;font-family:'Liberation Serif',serif;font-weight:bold;font-size:10px;color:#fff;-webkit-text-stroke:0.300px #fff;">8</div></div>
<div style="left:205.0px;top:905.5px;width:18.0px;height:17.0px;background:#4d4d4d;border-top:1px solid #5c5c5c;border-left:1px solid #5c5c5c;"><div class="t" style="left:0;top:0;width:17.5px;line-height:19px;text-align:center;font-size:12.5px;color:#e0e0e0;">3</div></div>
<div class="t" style="left:211.5px;top:955.5px;font-size:13.5px;line-height:19px;color:#e0e0e0;word-spacing:2px;">5 秒</div>
<svg style="left:242.0px;top:961.5px;" width="9.0" height="7.0" viewBox="0 0 9.0 7.0"><path d="M1 1.5l3.5 3.5l3.5 -3.5" fill="none" stroke="#c0c0c0" stroke-width="1.2"/></svg>
<div style="left:257.0px;top:900px;width:55.5px;height:75px;background:#4d4d4d;"></div>
<div style="left:312.5px;top:900px;width:2.0px;height:75px;background:#404040;"></div>
<div style="left:265.0px;top:910px;width:40.5px;height:40px;background:radial-gradient(circle at 20.2px 20.2px,#ff0000 0.0px,#ff001f 0.72px,#ff004c 1.43px,#ff0080 2.15px,#ff00b3 2.87px,#ff00e0 3.59px,#ff00ff 4.3px,#e000ff 5.17px,#b300ff 6.03px,#8000ff 6.89px,#4c00ff 7.75px,#1f00ff 8.61px,#0000ff 9.47px,#001fff 10.24px,#004cff 11.0px,#0080ff 11.77px,#00b3ff 12.53px,#00e0ff 13.3px,#00ffff 14.06px,#00ffe0 14.92px,#00ffb3 15.79px,#00ff80 16.65px,#00ff4c 17.51px,#00ff1f 18.37px,#00ff00 19.23px,#1fff00 20.09px,#4cff00 20.95px,#80ff00 21.81px,#b3ff00 22.67px,#e0ff00 23.53px,#ffff00 24.39px,#ffe000 25.11px,#ffb300 25.83px,#ff8000 26.55px,#ff4c00 27.26px,#ff1f00 27.98px,#ff0000 28.7px);"><div class="t" style="left:0;top:0;width:41px;height:41px;line-height:41px;text-align:center;font-family:'Liberation Serif',serif;font-weight:bold;font-size:10px;color:#fff;-webkit-text-stroke:0.300px #fff;">6</div></div>
<div style="left:262.5px;top:905.5px;width:18.0px;height:17.0px;background:#4d4d4d;border-top:1px solid #5c5c5c;border-left:1px solid #5c5c5c;"><div class="t" style="left:0;top:0;width:17.5px;line-height:19px;text-align:center;font-size:12.5px;color:#e0e0e0;">4</div></div>
<div class="t" style="left:269.0px;top:955.5px;font-size:13.5px;line-height:19px;color:#e0e0e0;word-spacing:2px;">5 秒</div>
<svg style="left:299.5px;top:961.5px;" width="9.0" height="7.0" viewBox="0 0 9.0 7.0"><path d="M1 1.5l3.5 3.5l3.5 -3.5" fill="none" stroke="#c0c0c0" stroke-width="1.2"/></svg>
<div style="left:314.5px;top:900px;width:55.5px;height:75px;background:#4d4d4d;"></div>
<div style="left:370.0px;top:900px;width:2.0px;height:75px;background:#404040;"></div>
<div style="left:322.5px;top:910px;width:40.5px;height:40px;background:radial-gradient(circle at 20.2px 20.2px,#ff0000 0.0px,#ff001f 0.72px,#ff004c 1.43px,#ff0080 2.15px,#ff00b3 2.87px,#ff00e0 3.59px,#ff00ff 4.3px,#e000ff 5.17px,#b300ff 6.03px,#8000ff 6.89px,#4c00ff 7.75px,#1f00ff 8.61px,#0000ff 9.47px,#001fff 10.24px,#004cff 11.0px,#0080ff 11.77px,#00b3ff 12.53px,#00e0ff 13.3px,#00ffff 14.06px,#00ffe0 14.92px,#00ffb3 15.79px,#00ff80 16.65px,#00ff4c 17.51px,#00ff1f 18.37px,#00ff00 19.23px,#1fff00 20.09px,#4cff00 20.95px,#80ff00 21.81px,#b3ff00 22.67px,#e0ff00 23.53px,#ffff00 24.39px,#ffe000 25.11px,#ffb300 25.83px,#ff8000 26.55px,#ff4c00 27.26px,#ff1f00 27.98px,#ff0000 28.7px);"><div class="t" style="left:0;top:0;width:41px;height:41px;line-height:41px;text-align:center;font-family:'Liberation Serif',serif;font-weight:bold;font-size:10px;color:#fff;-webkit-text-stroke:0.300px #fff;">5</div></div>
<div style="left:320.0px;top:905.5px;width:18.0px;height:17.0px;background:#4d4d4d;border-top:1px solid #5c5c5c;border-left:1px solid #5c5c5c;"><div class="t" style="left:0;top:0;width:17.5px;line-height:19px;text-align:center;font-size:12.5px;color:#e0e0e0;">5</div></div>
<div class="t" style="left:326.5px;top:955.5px;font-size:13.5px;line-height:19px;color:#e0e0e0;word-spacing:2px;">5 秒</div>
<svg style="left:357.0px;top:961.5px;" width="9.0" height="7.0" viewBox="0 0 9.0 7.0"><path d="M1 1.5l3.5 3.5l3.5 -3.5" fill="none" stroke="#c0c0c0" stroke-width="1.2"/></svg>
<div style="left:372.0px;top:900px;width:55.5px;height:75px;background:#4d4d4d;"></div>
<div style="left:427.5px;top:900px;width:2.0px;height:75px;background:#404040;"></div>
<div style="left:380.0px;top:910px;width:40.5px;height:40px;background:radial-gradient(circle at 20.2px 20.2px,#ff0000 0.0px,#ff001f 0.72px,#ff004c 1.43px,#ff0080 2.15px,#ff00b3 2.87px,#ff00e0 3.59px,#ff00ff 4.3px,#e000ff 5.17px,#b300ff 6.03px,#8000ff 6.89px,#4c00ff 7.75px,#1f00ff 8.61px,#0000ff 9.47px,#001fff 10.24px,#004cff 11.0px,#0080ff 11.77px,#00b3ff 12.53px,#00e0ff 13.3px,#00ffff 14.06px,#00ffe0 14.92px,#00ffb3 15.79px,#00ff80 16.65px,#00ff4c 17.51px,#00ff1f 18.37px,#00ff00 19.23px,#1fff00 20.09px,#4cff00 20.95px,#80ff00 21.81px,#b3ff00 22.67px,#e0ff00 23.53px,#ffff00 24.39px,#ffe000 25.11px,#ffb300 25.83px,#ff8000 26.55px,#ff4c00 27.26px,#ff1f00 27.98px,#ff0000 28.7px);"><div class="t" style="left:0;top:0;width:41px;height:41px;line-height:41px;text-align:center;font-family:'Liberation Serif',serif;font-weight:bold;font-size:10px;color:#fff;-webkit-text-stroke:0.300px #fff;">5</div></div>
<div style="left:377.5px;top:905.5px;width:18.0px;height:17.0px;background:#4d4d4d;border-top:1px solid #5c5c5c;border-left:1px solid #5c5c5c;"><div class="t" style="left:0;top:0;width:17.5px;line-height:19px;text-align:center;font-size:12.5px;color:#e0e0e0;">6</div></div>
<div class="t" style="left:384.0px;top:955.5px;font-size:13.5px;line-height:19px;color:#e0e0e0;word-spacing:2px;">5 秒</div>
<svg style="left:414.5px;top:961.5px;" width="9.0" height="7.0" viewBox="0 0 9.0 7.0"><path d="M1 1.5l3.5 3.5l3.5 -3.5" fill="none" stroke="#c0c0c0" stroke-width="1.2"/></svg>
<div style="left:429.5px;top:900px;width:55.5px;height:75px;background:#4d4d4d;"></div>
<div style="left:485.0px;top:900px;width:2.0px;height:75px;background:#404040;"></div>
<div style="left:437.5px;top:910px;width:40.5px;height:40px;background:radial-gradient(circle at 20.2px 20.2px,#ff0000 0.0px,#ff001f 0.72px,#ff004c 1.43px,#ff0080 2.15px,#ff00b3 2.87px,#ff00e0 3.59px,#ff00ff 4.3px,#e000ff 5.17px,#b300ff 6.03px,#8000ff 6.89px,#4c00ff 7.75px,#1f00ff 8.61px,#0000ff 9.47px,#001fff 10.24px,#004cff 11.0px,#0080ff 11.77px,#00b3ff 12.53px,#00e0ff 13.3px,#00ffff 14.06px,#00ffe0 14.92px,#00ffb3 15.79px,#00ff80 16.65px,#00ff4c 17.51px,#00ff1f 18.37px,#00ff00 19.23px,#1fff00 20.09px,#4cff00 20.95px,#80ff00 21.81px,#b3ff00 22.67px,#e0ff00 23.53px,#ffff00 24.39px,#ffe000 25.11px,#ffb300 25.83px,#ff8000 26.55px,#ff4c00 27.26px,#ff1f00 27.98px,#ff0000 28.7px);"><div class="t" style="left:0;top:0;width:41px;height:41px;line-height:41px;text-align:center;font-family:'Liberation Serif',serif;font-weight:bold;font-size:10px;color:#fff;-webkit-text-stroke:0.300px #fff;">3</div></div>
<div style="left:435.0px;top:905.5px;width:18.0px;height:17.0px;background:#4d4d4d;border-top:1px solid #5c5c5c;border-left:1px solid #5c5c5c;"><div class="t" style="left:0;top:0;width:17.5px;line-height:19px;text-align:center;font-size:12.5px;color:#e0e0e0;">7</div></div>
<div class="t" style="left:441.5px;top:955.5px;font-size:13.5px;line-height:19px;color:#e0e0e0;word-spacing:2px;">5 秒</div>
<svg style="left:472.0px;top:961.5px;" width="9.0" height="7.0" viewBox="0 0 9.0 7.0"><path d="M1 1.5l3.5 3.5l3.5 -3.5" fill="none" stroke="#c0c0c0" stroke-width="1.2"/></svg>
<div style="left:487.0px;top:900px;width:55.5px;height:75px;background:#4d4d4d;"></div>
<div style="left:542.5px;top:900px;width:2.0px;height:75px;background:#404040;"></div>
<div style="left:495.0px;top:910px;width:40.5px;height:40px;background:radial-gradient(circle at 20.2px 20.2px,#ff0000 0.0px,#ff001f 0.72px,#ff004c 1.43px,#ff0080 2.15px,#ff00b3 2.87px,#ff00e0 3.59px,#ff00ff 4.3px,#e000ff 5.17px,#b300ff 6.03px,#8000ff 6.89px,#4c00ff 7.75px,#1f00ff 8.61px,#0000ff 9.47px,#001fff 10.24px,#004cff 11.0px,#0080ff 11.77px,#00b3ff 12.53px,#00e0ff 13.3px,#00ffff 14.06px,#00ffe0 14.92px,#00ffb3 15.79px,#00ff80 16.65px,#00ff4c 17.51px,#00ff1f 18.37px,#00ff00 19.23px,#1fff00 20.09px,#4cff00 20.95px,#80ff00 21.81px,#b3ff00 22.67px,#e0ff00 23.53px,#ffff00 24.39px,#ffe000 25.11px,#ffb300 25.83px,#ff8000 26.55px,#ff4c00 27.26px,#ff1f00 27.98px,#ff0000 28.7px);"><div class="t" style="left:0;top:0;width:41px;height:41px;line-height:41px;text-align:center;font-family:'Liberation Serif',serif;font-weight:bold;font-size:10px;color:#fff;-webkit-text-stroke:0.300px #fff;">3</div></div>
<div style="left:492.5px;top:905.5px;width:18.0px;height:17.0px;background:#4d4d4d;border-top:1px solid #5c5c5c;border-left:1px solid #5c5c5c;"><div class="t" style="left:0;top:0;width:17.5px;line-height:19px;text-align:center;font-size:12.5px;color:#e0e0e0;">8</div></div>
<div class="t" style="left:499.0px;top:955.5px;font-size:13.5px;line-height:19px;color:#e0e0e0;word-spacing:2px;">5 秒</div>
<svg style="left:529.5px;top:961.5px;" width="9.0" height="7.0" viewBox="0 0 9.0 7.0"><path d="M1 1.5l3.5 3.5l3.5 -3.5" fill="none" stroke="#c0c0c0" stroke-width="1.2"/></svg>
<div style="left:544.5px;top:900px;width:55.5px;height:75px;background:#4d4d4d;"></div>
<div style="left:600.0px;top:900px;width:2.0px;height:75px;background:#404040;"></div>
<div style="left:552.5px;top:910px;width:40.5px;height:40px;background:radial-gradient(circle at 20.2px 20.2px,#ff0000 0.0px,#ff001f 0.72px,#ff004c 1.43px,#ff0080 2.15px,#ff00b3 2.87px,#ff00e0 3.59px,#ff00ff 4.3px,#e000ff 5.17px,#b300ff 6.03px,#8000ff 6.89px,#4c00ff 7.75px,#1f00ff 8.61px,#0000ff 9.47px,#001fff 10.24px,#004cff 11.0px,#0080ff 11.77px,#00b3ff 12.53px,#00e0ff 13.3px,#00ffff 14.06px,#00ffe0 14.92px,#00ffb3 15.79px,#00ff80 16.65px,#00ff4c 17.51px,#00ff1f 18.37px,#00ff00 19.23px,#1fff00 20.09px,#4cff00 20.95px,#80ff00 21.81px,#b3ff00 22.67px,#e0ff00 23.53px,#ffff00 24.39px,#ffe000 25.11px,#ffb300 25.83px,#ff8000 26.55px,#ff4c00 27.26px,#ff1f00 27.98px,#ff0000 28.7px);"><div class="t" style="left:0;top:0;width:41px;height:41px;line-height:41px;text-align:center;font-family:'Liberation Serif',serif;font-weight:bold;font-size:10px;color:#fff;-webkit-text-stroke:0.300px #fff;">1</div></div>
<div style="left:550.0px;top:905.5px;width:18.0px;height:17.0px;background:#4d4d4d;border-top:1px solid #5c5c5c;border-left:1px solid #5c5c5c;"><div class="t" style="left:0;top:0;width:17.5px;line-height:19px;text-align:center;font-size:12.5px;color:#e0e0e0;">9</div></div>
<div class="t" style="left:556.5px;top:955.5px;font-size:13.5px;line-height:19px;color:#e0e0e0;word-spacing:2px;">5 秒</div>
<svg style="left:587.0px;top:961.5px;" width="9.0" height="7.0" viewBox="0 0 9.0 7.0"><path d="M1 1.5l3.5 3.5l3.5 -3.5" fill="none" stroke="#c0c0c0" stroke-width="1.2"/></svg>
<div style="left:602.0px;top:900px;width:55.5px;height:75px;background:#4d4d4d;"></div>
<div style="left:657.5px;top:900px;width:2.0px;height:75px;background:#404040;"></div>
<div style="left:610.0px;top:910px;width:40.5px;height:40px;background:radial-gradient(circle at 20.2px 20.2px,#ff0000 0.0px,#ff001f 0.72px,#ff004c 1.43px,#ff0080 2.15px,#ff00b3 2.87px,#ff00e0 3.59px,#ff00ff 4.3px,#e000ff 5.17px,#b300ff 6.03px,#8000ff 6.89px,#4c00ff 7.75px,#1f00ff 8.61px,#0000ff 9.47px,#001fff 10.24px,#004cff 11.0px,#0080ff 11.77px,#00b3ff 12.53px,#00e0ff 13.3px,#00ffff 14.06px,#00ffe0 14.92px,#00ffb3 15.79px,#00ff80 16.65px,#00ff4c 17.51px,#00ff1f 18.37px,#00ff00 19.23px,#1fff00 20.09px,#4cff00 20.95px,#80ff00 21.81px,#b3ff00 22.67px,#e0ff00 23.53px,#ffff00 24.39px,#ffe000 25.11px,#ffb300 25.83px,#ff8000 26.55px,#ff4c00 27.26px,#ff1f00 27.98px,#ff0000 28.7px);"><div class="t" style="left:17.500px;top:0;height:41px;line-height:41px;font-family:'Liberation Serif',serif;font-weight:bold;font-size:9px;color:#fff;-webkit-text-stroke:0.300px #fff;letter-spacing:0.300px;">GO</div></div>
<div style="left:607.5px;top:905.5px;width:24.5px;height:17.0px;background:#4d4d4d;border-top:1px solid #5c5c5c;border-left:1px solid #5c5c5c;"><div class="t" style="left:0;top:0;width:24px;line-height:19px;text-align:center;font-size:12.5px;color:#e0e0e0;">10</div></div>
<div class="t" style="left:614.0px;top:955.5px;font-size:13.5px;line-height:19px;color:#e0e0e0;word-spacing:2px;">5 秒</div>
<svg style="left:644.5px;top:961.5px;" width="9.0" height="7.0" viewBox="0 0 9.0 7.0"><path d="M1 1.5l3.5 3.5l3.5 -3.5" fill="none" stroke="#c0c0c0" stroke-width="1.2"/></svg>
<div style="left:659.5px;top:900px;width:55.5px;height:75px;background:#6b6b6b;"></div>
<div style="left:715.0px;top:900px;width:2.0px;height:75px;background:#404040;"></div>
<div style="left:663.0px;top:904px;width:49.5px;height:49.5px;border:1px solid #f0f0f0;"></div>
<div style="left:667.5px;top:910px;width:40.5px;height:40px;background:radial-gradient(circle at 20.2px 20.2px,#ff0000 0.0px,#ff001f 0.72px,#ff004c 1.43px,#ff0080 2.15px,#ff00b3 2.87px,#ff00e0 3.59px,#ff00ff 4.3px,#e000ff 5.17px,#b300ff 6.03px,#8000ff 6.89px,#4c00ff 7.75px,#1f00ff 8.61px,#0000ff 9.47px,#001fff 10.24px,#004cff 11.0px,#0080ff 11.77px,#00b3ff 12.53px,#00e0ff 13.3px,#00ffff 14.06px,#00ffe0 14.92px,#00ffb3 15.79px,#00ff80 16.65px,#00ff4c 17.51px,#00ff1f 18.37px,#00ff00 19.23px,#1fff00 20.09px,#4cff00 20.95px,#80ff00 21.81px,#b3ff00 22.67px,#e0ff00 23.53px,#ffff00 24.39px,#ffe000 25.11px,#ffb300 25.83px,#ff8000 26.55px,#ff4c00 27.26px,#ff1f00 27.98px,#ff0000 28.7px);"><div class="t" style="left:17.500px;top:0;height:41px;line-height:41px;font-family:'Liberation Serif',serif;font-weight:bold;font-size:9px;color:#fff;-webkit-text-stroke:0.300px #fff;letter-spacing:0.300px;">GO</div></div>
<div style="left:665.0px;top:905.5px;width:24.5px;height:17.0px;background:#6b6b6b;"><div class="t" style="left:0;top:0;width:24px;line-height:19px;text-align:center;font-size:12.5px;color:#fff;font-weight:bold;">11</div></div>
<div class="t" style="left:671.5px;top:955.5px;font-size:13.5px;line-height:19px;color:#e0e0e0;word-spacing:2px;">5 秒</div>
<svg style="left:702.0px;top:961.5px;" width="9.0" height="7.0" viewBox="0 0 9.0 7.0"><path d="M1 1.5l3.5 3.5l3.5 -3.5" fill="none" stroke="#c0c0c0" stroke-width="1.2"/></svg>
<svg style="left:96px;top:984px;" width="18" height="16" viewBox="0 0 18 16"><rect x="0" y="4" width="3" height="2.200" fill="#d0d0d0"/><rect x="0" y="8" width="3" height="2.200" fill="#d0d0d0"/><rect x="0" y="12" width="3" height="2.200" fill="#d0d0d0"/><rect x="4.500" y="0" width="3" height="14.500" fill="#d0d0d0"/><rect x="8.500" y="3.800" width="7" height="2.400" fill="#d0d0d0"/><rect x="8.500" y="7.800" width="9" height="2.400" fill="#d0d0d0"/><rect x="8.500" y="11.800" width="8" height="2.400" fill="#d0d0d0"/></svg>
<div class="t" style="left:135px;top:981.5px;font-size:14.5px;line-height:20px;color:#bdbdbd;">永远</div>
<svg style="left:183.5px;top:989.5px;" width="10" height="7" viewBox="0 0 10 7"><path d="M0 0h10l-5 7z" fill="#d0d0d0"/></svg>
<svg style="left:211px;top:987px;" width="14" height="10" viewBox="0 0 14 10"><rect x="0" y="0" width="2.500" height="10" fill="#d0d0d0"/><path d="M13.500 0v10l-9-5z" fill="#d0d0d0"/></svg>
<svg style="left:246px;top:987px;" width="14" height="10" viewBox="0 0 14 10"><path d="M8 0v10l-8-5z" fill="#d0d0d0"/><rect x="9.500" y="0" width="2.500" height="10" fill="#d0d0d0"/></svg>
<svg style="left:285px;top:986px;" width="12" height="12" viewBox="0 0 12 12"><path d="M0 0v12l11.500-6z" fill="#d0d0d0"/></svg>
<svg style="left:320px;top:987px;" width="14" height="10" viewBox="0 0 14 10"><rect x="0" y="0" width="2.500" height="10" fill="#d0d0d0"/><path d="M4.500 0v10l8.500-5z" fill="#d0d0d0"/></svg>
<svg style="left:356px;top:986px;" width="17" height="13" viewBox="0 0 17 13"><circle cx="2" cy="2" r="1.800" fill="#7c7c7c"/><circle cx="6" cy="4.500" r="2.300" fill="#858585"/><circle cx="10.500" cy="7.500" r="2.600" fill="#8f8f8f"/><circle cx="14" cy="10" r="2.800" fill="#a0a0a0"/></svg>
<svg style="left:393px;top:985px;" width="13" height="13" viewBox="0 0 13 13"><path d="M1 1h11v11h-6.500l-4.500-4.500z" fill="none" stroke="#d0d0d0" stroke-width="1.600"/><path d="M1 7.500h4.500v4.500" fill="none" stroke="#d0d0d0" stroke-width="1.300"/></svg>
<svg style="left:429px;top:984.5px;" width="13" height="15" viewBox="0 0 13 15"><path d="M0 2.800h13" stroke="#d0d0d0" stroke-width="1.600"/><path d="M4 2.500v-1.700h5v1.700" fill="none" stroke="#d0d0d0" stroke-width="1.300"/><path d="M1.500 4.500h10v9.700h-10z" fill="none" stroke="#d0d0d0" stroke-width="1.500"/><path d="M4.300 6.500v6M6.500 6.500v6M8.700 6.500v6" stroke="#d0d0d0" stroke-width="1.100"/></svg>
<svg style="left:0;top:0;pointer-events:none" width="1920" height="1080"><path d="M781 992L677.1 950.8" stroke="#ff1414" stroke-width="3" stroke-linecap="round"/><polygon points="665.0,946.0 683.2,946.2 678.4,958.3" fill="#ff1414"/></svg>
<!-- p_right1 -->
<div style="left:1405px;top:82px;width:515px;height:13px;background:#424242;"></div>
<div style="left:1405px;top:95px;width:515px;height:1px;background:#333;"></div>
<svg style="left:1438px;top:85.5px;" width="7" height="5" viewBox="0 0 7 5"><path d="M2.800 0.300l-2.300 2.200l2.300 2.200M6.100 0.300l-2.300 2.200l2.300 2.200" fill="none" stroke="#d8d8d8" stroke-width="1.100"/></svg>
<svg style="left:1904px;top:85.5px;" width="7" height="5" viewBox="0 0 7 5"><path d="M0.500 0.300l2.300 2.200l-2.300 2.200M3.800 0.300l2.300 2.200l-2.300 2.200" fill="none" stroke="#d8d8d8" stroke-width="1.100"/></svg>
<div style="left:1405px;top:96px;width:48px;height:932px;background:#535353;"></div>
<div style="left:1453px;top:96px;width:3px;height:932px;background:#3a3a3a;"></div>
<div style="left:1405px;top:146px;width:48px;height:2px;background:#3a3a3a;"></div>
<div style="left:1405px;top:233px;width:48px;height:2px;background:#3a3a3a;"></div>
<div style="left:1405px;top:319px;width:48px;height:2px;background:#3a3a3a;"></div>
<div style="left:1405px;top:371px;width:48px;height:2px;background:#3a3a3a;"></div>
<div style="left:1418.0px;top:100px;width:1.0px;height:5px;background:#424242;"></div>
<div style="left:1420.7px;top:100px;width:1.0px;height:5px;background:#424242;"></div>
<div style="left:1423.4px;top:100px;width:1.0px;height:5px;background:#424242;"></div>
<div style="left:1426.1px;top:100px;width:1.0px;height:5px;background:#424242;"></div>
<div style="left:1428.8px;top:100px;width:1.0px;height:5px;background:#424242;"></div>
<div style="left:1431.5px;top:100px;width:1.0px;height:5px;background:#424242;"></div>
<div style="left:1434.2px;top:100px;width:1.0px;height:5px;background:#424242;"></div>
<div style="left:1436.9px;top:100px;width:1.0px;height:5px;background:#424242;"></div>
<div style="left:1439.6px;top:100px;width:1.0px;height:5px;background:#424242;"></div>
<div style="left:1418.0px;top:151px;width:1.0px;height:5px;background:#424242;"></div>
<div style="left:1420.7px;top:151px;width:1.0px;height:5px;background:#424242;"></div>
<div style="left:1423.4px;top:151px;width:1.0px;height:5px;background:#424242;"></div>
<div style="left:1426.1px;top:151px;width:1.0px;height:5px;background:#424242;"></div>
<div style="left:1428.8px;top:151px;width:1.0px;height:5px;background:#424242;"></div>
<div style="left:1431.5px;top:151px;width:1.0px;height:5px;background:#424242;"></div>
<div style="left:1434.2px;top:151px;width:1.0px;height:5px;background:#424242;"></div>
<div style="left:1436.9px;top:151px;width:1.0px;height:5px;background:#424242;"></div>
<div style="left:1439.6px;top:151px;width:1.0px;height:5px;background:#424242;"></div>
<div style="left:1418.0px;top:238px;width:1.0px;height:5px;background:#424242;"></div>
<div style="left:1420.7px;top:238px;width:1.0px;height:5px;background:#424242;"></div>
<div style="left:1423.4px;top:238px;width:1.0px;height:5px;background:#424242;"></div>
<div style="left:1426.1px;top:238px;width:1.0px;height:5px;background:#424242;"></div>
<div style="left:1428.8px;top:238px;width:1.0px;height:5px;background:#424242;"></div>
<div style="left:1431.5px;top:238px;width:1.0px;height:5px;background:#424242;"></div>
<div style="left:1434.2px;top:238px;width:1.0px;height:5px;background:#424242;"></div>
<div style="left:1436.9px;top:238px;width:1.0px;height:5px;background:#424242;"></div>
<div style="left:1439.6px;top:238px;width:1.0px;height:5px;background:#424242;"></div>
<div style="left:1418.0px;top:324px;width:1.0px;height:5px;background:#424242;"></div>
<div style="left:1420.7px;top:324px;width:1.0px;height:5px;background:#424242;"></div>
<div style="left:1423.4px;top:324px;width:1.0px;height:5px;background:#424242;"></div>
<div style="left:1426.1px;top:324px;width:1.0px;height:5px;background:#424242;"></div>
<div style="left:1428.8px;top:324px;width:1.0px;height:5px;background:#424242;"></div>
<div style="left:1431.5px;top:324px;width:1.0px;height:5px;background:#424242;"></div>
<div style="left:1434.2px;top:324px;width:1.0px;height:5px;background:#424242;"></div>
<div style="left:1436.9px;top:324px;width:1.0px;height:5px;background:#424242;"></div>
<div style="left:1439.6px;top:324px;width:1.0px;height:5px;background:#424242;"></div>
<svg style="left:1422px;top:115px;" width="19" height="22" viewBox="0 0 19 22"><rect x="0.700" y="0.700" width="5" height="5" fill="none" stroke="#d6d6d6" stroke-width="1.300"/><rect x="0.700" y="8.200" width="5" height="5" fill="none" stroke="#d6d6d6" stroke-width="1.300"/><rect x="0" y="15.500" width="6.400" height="6" fill="#d6d6d6"/><path d="M9.500 4.500l5-3.500v2.200q5.500 4.500 1.500 12.300q-2 3.200-5.500 4.500q6-6 2.500-12.500l-0.500 2.500z" fill="#d6d6d6"/></svg>
<svg style="left:1418px;top:166px;" width="26" height="22" viewBox="0 0 26 22"><rect x="0" y="1" width="2" height="2" fill="#d6d6d6"/><rect x="3.500" y="1" width="6" height="2" fill="#d6d6d6"/><rect x="0" y="4.500" width="2" height="2" fill="#d6d6d6"/><rect x="3.500" y="4.500" width="6" height="2" fill="#d6d6d6"/><rect x="0" y="8" width="2" height="2" fill="#d6d6d6"/><rect x="3.500" y="8" width="6" height="2" fill="#d6d6d6"/><path d="M25.500 3q-3 6.500-10 11.500l-2.500-2.800q5.500-6.200 12.500-8.700z" fill="#d6d6d6"/><path d="M11.800 13l2.600 2.800q-2 5-9 5q3-1.700 3.300-4q0.300-2.800 3.100-3.800z" fill="#d6d6d6"/></svg>
<svg style="left:1418px;top:203px;" width="26" height="22" viewBox="0 0 26 22"><path d="M0 3.500q4-4 8 0q1.500 1.500 4 1.500h13v2.300h-13q-2.500 0-4 1.300q-4 3-8-1z" fill="#d6d6d6"/><path d="M3 14.500h12q2 0 3.500-1.500q2.500-2.500 6-3.500q1.500 6-1 11.500q-3-1.500-6-4q-1.300-1-3-0.800h-11.500z" fill="#d6d6d6"/></svg>
<div class="t" style="left:1421px;top:247.5px;font-size:23px;line-height:32px;color:#d6d6d6;font-weight:normal;">A</div>
<div style="left:1438.5px;top:253px;width:1.5px;height:22px;background:#d6d6d6;"></div>
<svg style="left:1423px;top:290px;" width="15" height="20" viewBox="0 0 15 20"><path d="M6.500 0h8.500v1.800h-1.500v18h-1.800v-18h-2v18h-1.800v-8.500h-1.400a5.600 5.600 0 0 1 0-11.300z" fill="#d6d6d6"/></svg>
<svg style="left:1420px;top:338px;" width="21" height="22" viewBox="0 0 21 22"><path d="M6.500 0.500l6 2.800v6.700l-6 3l-6-3v-6.700z" fill="#8a8a8a" stroke="#d6d6d6" stroke-width="1"/><path d="M0.500 3.300l6 2.900l6-2.900M6.500 6.200v6.800" fill="none" stroke="#d6d6d6" stroke-width="1"/><rect x="15" y="0.500" width="5" height="4.500" fill="#d6d6d6"/><rect x="15" y="7" width="5" height="4.500" fill="#d6d6d6"/><rect x="0.500" y="16" width="19.500" height="5" fill="#d6d6d6"/><path d="M15 17.500h4l-2 2.500z" fill="#535353"/></svg>
<div style="left:1456px;top:96px;width:464px;height:176px;background:#535353;"></div>
<div style="left:1456px;top:96px;width:464px;height:34px;background:#424242;"></div>
<div style="left:1456px;top:96px;width:54px;height:35px;background:#535353;"></div>
<div style="left:1509px;top:96px;width:1px;height:34px;background:#383838;"></div>
<div class="t" style="left:1468px;top:103.3px;font-size:14.5px;line-height:20px;color:#f0f0f0;">颜色</div>
<div style="left:1564px;top:96px;width:1px;height:34px;background:#383838;"></div>
<div class="t" style="left:1522px;top:103.3px;font-size:14.5px;line-height:20px;color:#a8a8a8;">色板</div>
<svg style="left:1898.5px;top:108.0px;" width="13" height="10" viewBox="0 0 13 10"><path d="M0 1h13M0 3.700h13M0 6.400h13M0 9.100h13" stroke="#c4c4c4" stroke-width="1.200"/></svg>
<div style="left:1456px;top:271px;width:464px;height:4px;background:#3a3a3a;"></div>
<div style="left:1481px;top:157px;width:22px;height:22px;background:#0000ff;border:1px solid #e8e8e8;box-shadow:0 0 0 1px #3a3a3a;"></div>
<div style="left:1466px;top:142px;width:28px;height:28px;background:#222;border:2px solid #8c8c8c;"></div>
<div style="left:1469px;top:145px;width:22px;height:22px;background:#ff0000;border:1px solid #fff;"></div>
<svg style="left:1466px;top:209px;" width="15" height="14" viewBox="0 0 15 14"><path d="M7.500 0.500l7 13h-14z" fill="#dcdcdc"/><path d="M7.500 4.500v5" stroke="#535353" stroke-width="1.800"/><circle cx="7.500" cy="11.300" r="1" fill="#535353"/></svg>
<div style="left:1486px;top:210px;width:16px;height:16px;background:#e51c1c;border:1px solid #f0f0f0;box-shadow:0 0 0 1px #333;"></div>
<div style="left:1512px;top:139px;width:342px;height:105px;background:#ff0000;background:linear-gradient(to top,#000,rgba(0,0,0,0)),linear-gradient(to right,#fff,#ff0000);overflow:hidden;"><div style="left:333px;top:-8px;width:16px;height:16px;border:1.300px solid #fff;border-radius:50%;"></div></div>
<div style="left:1875px;top:139px;width:24px;height:105px;background:linear-gradient(to bottom,#ff0000 0,#ff00ff 16.700%,#0000ff 33.300%,#00ffff 50%,#00ff00 66.700%,#ffff00 83.300%,#ff0000 100%);"></div>
<svg style="left:1864px;top:136px;" width="9" height="10" viewBox="0 0 9 10"><path d="M0.500 1.500q0-1 1-1h2.500l4.500 4.500l-4.500 4.500h-2.500q-1 0-1-1z" fill="#f0f0f0"/></svg>
<!-- p_right2 -->
<div style="left:1456px;top:275px;width:464px;height:312px;background:#535353;"></div>
<div style="left:1456px;top:275px;width:464px;height:35px;background:#424242;"></div>
<div style="left:1456px;top:275px;width:53px;height:36px;background:#535353;"></div>
<div style="left:1508px;top:275px;width:1px;height:35px;background:#383838;"></div>
<div class="t" style="left:1468px;top:282.8px;font-size:14.5px;line-height:20px;color:#f0f0f0;">学习</div>
<div style="left:1558px;top:275px;width:1px;height:35px;background:#383838;"></div>
<div class="t" style="left:1521px;top:282.8px;font-size:14.5px;line-height:20px;color:#a8a8a8;">库</div>
<div style="left:1614px;top:275px;width:1px;height:35px;background:#383838;"></div>
<div class="t" style="left:1571px;top:282.8px;font-size:14.5px;line-height:20px;color:#a8a8a8;">调整</div>
<svg style="left:1898.5px;top:287.5px;" width="13" height="10" viewBox="0 0 13 10"><path d="M0 1h13M0 3.700h13M0 6.400h13M0 9.100h13" stroke="#c4c4c4" stroke-width="1.200"/></svg>
<div class="t" style="left:1427.5px;width:500px;text-align:center;top:337.5px;font-size:21.5px;line-height:30px;color:#fff;">了解 Photoshop</div>
<div class="t" style="left:1427.5px;width:500px;text-align:center;top:377.0px;font-size:20px;line-height:28px;color:#fff;">在应用程序内直接提供的分步指导教程。从</div>
<div class="t" style="left:1427.5px;width:500px;text-align:center;top:402.5px;font-size:20px;line-height:28px;color:#fff;">下面选取一个主题开始教程。</div>
<div style="left:1469px;top:453px;width:420px;height:75px;background:#2e2e2e;border-radius:5px;overflow:hidden;"><div style="left:0px;top:0px;width:125px;height:75px;overflow:hidden;"><svg style="left:0;top:0" width="125" height="75" viewBox="0 0 125 75"><defs><filter id="b1"><feGaussianBlur stdDeviation="0.7"/></filter><linearGradient id="w1" x1="0" y1="0" x2="0" y2="1"><stop offset="0" stop-color="#1b2149"/><stop offset="1" stop-color="#262c58"/></linearGradient><linearGradient id="f1" x1="0" y1="0" x2="0" y2="1"><stop offset="0" stop-color="#2b2f55"/><stop offset="1" stop-color="#14152b"/></linearGradient></defs><g filter="url(#b1)"><rect width="125" height="75" fill="#1f2550"/><path d="M0 0h125v10l-17 6h-85l-23-8z" fill="#181d44"/><path d="M0 8l23 8v40l-23 12z" fill="#2a3162"/><path d="M108 16l17-6v55l-17-10z" fill="#1d2247"/><rect x="23" y="16" width="85" height="40" fill="url(#w1)"/><path d="M0 68l23-12h85l17 10v9h-125z" fill="url(#f1)"/><rect x="24.500" y="19" width="23" height="24" fill="#3d467c"/><rect x="26" y="24" width="9" height="16" fill="#0c1030"/><rect x="36.500" y="24" width="9.500" height="16" fill="#0a0d2a"/><rect x="53.500" y="19" width="17" height="37" fill="#363e74"/><rect x="54.500" y="21" width="4.500" height="35" fill="#070a1e"/><path d="M58.500 21l11.500 1.500v32l-11.500 1.500z" fill="#bcc4f2"/><rect x="76" y="19" width="10" height="21" fill="#2a2c55"/><rect x="77.500" y="21" width="7" height="15" fill="#474878"/><circle cx="92" cy="20.500" r="3.600" fill="#4b5388"/><circle cx="101.500" cy="29" r="4.600" fill="#434a7c"/><circle cx="106.500" cy="22" r="3.200" fill="#5b5868"/><circle cx="112" cy="28" r="3.300" fill="#23264a"/><path d="M2 24l7.500 1.500v16.500l-7.500 1.500z" fill="#27305f"/><path d="M11.500 27l4.500 0.800v10.500l-4.500 0.800z" fill="#43508f"/><rect x="26.500" y="48" width="18" height="12" fill="#23284d"/><rect x="26.500" y="48" width="18" height="2" fill="#474f84"/><rect x="32" y="40" width="1.800" height="8" fill="#7f8bc4"/><path d="M37 39l7-4l1 1.500l-7 4z" fill="#9a8f9a"/><path d="M82 50q8-5 18-1l22 7q3 2 3 5v12h-23l-20-15z" fill="#2b3466"/><path d="M83 51q7-4 16-1l20 7l-12 8l-22-9z" fill="#6f7cba"/><path d="M56 57h15l12 12h-20z" fill="#6a75b8"/><path d="M66 60l12 3l6 7h-14z" fill="#2c3260"/><rect x="0" y="50" width="12" height="25" fill="#181b38"/><rect width="125" height="75" fill="#0b0c18" opacity="0.340"/><circle cx="58.500" cy="6.500" r="1.800" fill="#c6d2f5"/><circle cx="27" cy="3" r="0.500" fill="#8c9be0"/><circle cx="75" cy="3" r="0.500" fill="#8c9be0"/><circle cx="99" cy="10" r="0.500" fill="#8c9be0"/><circle cx="17" cy="10" r="0.500" fill="#8c9be0"/><circle cx="42" cy="8" r="0.500" fill="#8c9be0"/></g></svg></div>
</div>
<div class="t" style="left:1612.5px;top:477.0px;font-size:20px;line-height:28px;color:#fff;">基本技能</div>
<svg style="left:1856px;top:480px;" width="11" height="20" viewBox="0 0 11 20"><path d="M1 1l9 9l-9 9" fill="none" stroke="#e8e8e8" stroke-width="1.500"/></svg>
<div style="left:1469px;top:541px;width:420px;height:46px;background:#2e2e2e;border-radius:5px 5px 0 0;overflow:hidden;"><div style="left:0px;top:0px;width:125px;height:75px;overflow:hidden;"><svg style="left:0;top:0" width="125" height="75" viewBox="0 0 125 75"><defs><filter id="b2"><feGaussianBlur stdDeviation="0.900"/></filter><filter id="b3"><feGaussianBlur stdDeviation="3"/></filter><linearGradient id="g2" x1="0" y1="0" x2="1" y2="0"><stop offset="0" stop-color="#f4ece6"/><stop offset="0.550" stop-color="#f6eeee"/><stop offset="0.800" stop-color="#f9dfe0"/><stop offset="1" stop-color="#f7e4e4"/></linearGradient></defs><rect width="125" height="75" fill="url(#g2)"/><g filter="url(#b3)"><rect x="0" y="11" width="32" height="13" fill="#ecc9a4"/><ellipse cx="102" cy="26" rx="10" ry="16" fill="#f6b6bd"/><ellipse cx="121" cy="24" rx="4" ry="8" fill="#f2a3ad"/><ellipse cx="8" cy="9" rx="5" ry="5" fill="#2e2424"/><ellipse cx="15" cy="42" rx="13" ry="5" fill="#d9a050"/></g><g filter="url(#b2)"><path d="M40 8q8-5 18-4l18 1q10 2 12 10l4 30h-55q-3-20 3-37z" fill="#f1eff3"/><path d="M58 2h16l-3 9l-6 5l-5-6z" fill="#e7c3b4"/><path d="M49 0h38q0 8-6 10q-3-6-8-7q-3 4-7 6q-2-5-9-5q-5 0-8-4z" fill="#3b2a22"/><path d="M38 36q1 8 6 9h8z" fill="#e6c2b2"/><path d="M60 24q10-8 22-2q10 2 14 10q2 8-4 13h-44q-6-8 0-13q4-6 12-8z" fill="#3f7a38"/><circle cx="56" cy="35" r="5.500" fill="#8d2f57"/><circle cx="50" cy="41" r="4" fill="#a23a63"/><circle cx="65" cy="30" r="4" fill="#c987a0"/><circle cx="62" cy="41" r="4.500" fill="#7c2a4c"/><circle cx="72" cy="25" r="3.500" fill="#d7a0b4"/><circle cx="89" cy="29" r="4.500" fill="#5a4bb8"/><circle cx="91" cy="36" r="3" fill="#4a3da0"/><circle cx="85" cy="42" r="5" fill="#f0a21f"/><circle cx="77" cy="44" r="3.500" fill="#f4b840"/><circle cx="78" cy="34" r="3" fill="#e8d8c0"/><circle cx="9" cy="43" r="3" fill="#e88a28"/><circle cx="17" cy="40" r="2.500" fill="#6b3a5a"/><circle cx="22" cy="36" r="2.500" fill="#4b7a3a"/><circle cx="3" cy="40" r="2" fill="#5d8a3a"/></g></svg></div>
</div>
<div style="left:1594px;top:560px;width:106px;height:27px;overflow:hidden;"><div class="t" style="left:18.5px;top:3.5px;font-size:20px;line-height:28px;color:#fff;">修复照片</div>
</div>
<div style="left:1850px;top:560px;width:20px;height:27px;overflow:hidden;"><svg style="left:6px;top:7px;" width="11" height="20" viewBox="0 0 11 20"><path d="M1 1l9 9l-9 9" fill="none" stroke="#e8e8e8" stroke-width="1.500"/></svg>
</div>
<div style="left:1899px;top:310px;width:21px;height:277px;background:#4a4a4a;"></div>
<div style="left:1902px;top:331px;width:15px;height:131px;background:#6b6b6b;"></div>
<svg style="left:1904.0px;top:321px;" width="11" height="6" viewBox="0 0 11 6"><path d="M1 5l4.500-4l4.500 4" fill="none" stroke="#8c8c8c" stroke-width="1.200"/></svg>
<svg style="left:1904.0px;top:570.5px;" width="11" height="6" viewBox="0 0 11 6"><path d="M1 1l4.500 4l4.500-4" fill="none" stroke="#8c8c8c" stroke-width="1.200"/></svg>
<div style="left:1906px;top:344px;width:12px;height:74px;background:#262626;border:1px solid #8a8a8a;border-radius:4px;"><div style="left:2px;top:38.0px;width:7.5px;height:2.0px;background:#35d25a;"></div>
<div style="left:2px;top:41.2px;width:7.5px;height:2.0px;background:#35d25a;"></div>
<div style="left:2px;top:44.4px;width:7.5px;height:2.0px;background:#35d25a;"></div>
<div style="left:2px;top:47.6px;width:7.5px;height:2.0px;background:#35d25a;"></div>
<div style="left:2px;top:50.8px;width:7.5px;height:2.0px;background:#35d25a;"></div>
<div style="left:2px;top:54.0px;width:7.5px;height:2.0px;background:#35d25a;"></div>
<div style="left:2px;top:57.2px;width:7.5px;height:2.0px;background:#35d25a;"></div>
<div style="left:2px;top:60.400000000000006px;width:7.5px;height:2.0px;background:#35d25a;"></div>
<div style="left:2px;top:63.6px;width:7.5px;height:1.999999999999993px;background:#35d25a;"></div>
<div style="left:2px;top:66.8px;width:7.5px;height:2.0px;background:#35d25a;"></div>
</div>
<div style="left:1456px;top:586px;width:464px;height:4px;background:#3a3a3a;"></div>
<!-- p_right3 -->
<div style="left:1456px;top:590px;width:464px;height:438px;background:#535353;"></div>
<div style="left:1456px;top:590px;width:464px;height:34px;background:#424242;"></div>
<div style="left:1456px;top:590px;width:55px;height:35px;background:#535353;"></div>
<div style="left:1510px;top:590px;width:1px;height:34px;background:#383838;"></div>
<div class="t" style="left:1468px;top:597.3px;font-size:14.5px;line-height:20px;color:#f0f0f0;">图层</div>
<div style="left:1567px;top:590px;width:1px;height:34px;background:#383838;"></div>
<div class="t" style="left:1523px;top:597.3px;font-size:14.5px;line-height:20px;color:#a8a8a8;">通道</div>
<div style="left:1622px;top:590px;width:1px;height:34px;background:#383838;"></div>
<div class="t" style="left:1580px;top:597.3px;font-size:14.5px;line-height:20px;color:#a8a8a8;">路径</div>
<svg style="left:1898.5px;top:602.0px;" width="13" height="10" viewBox="0 0 13 10"><path d="M0 1h13M0 3.700h13M0 6.400h13M0 9.100h13" stroke="#c4c4c4" stroke-width="1.200"/></svg>
<div style="left:1461px;top:637px;width:105px;height:25px;background:#454545;border:1px solid #626262;border-radius:3px;"></div>
<svg style="left:1470px;top:643.5px;" width="13" height="13" viewBox="0 0 13 13"><circle cx="5" cy="5" r="3.800" fill="none" stroke="#d6d6d6" stroke-width="1.700"/><path d="M7.800 7.800l4 4" fill="none" stroke="#d6d6d6" stroke-width="2.200"/></svg>
<div class="t" style="left:1489px;top:638.0px;font-size:14.5px;line-height:20px;color:#f0f0f0;">类型</div>
<svg style="left:1553.0px;top:647.0px;" width="9.0" height="7.0" viewBox="0 0 9.0 7.0"><path d="M1 1.5l3.5 3.5l3.5 -3.5" fill="none" stroke="#c8c8c8" stroke-width="1.3"/></svg>
<svg style="left:1588.5px;top:642px;" width="16" height="13" viewBox="0 0 16 13"><rect x="0.700" y="0.700" width="14.600" height="11.600" fill="none" stroke="#d6d6d6" stroke-width="1.400"/><path d="M2.500 10.500l3.500-4.500l2.500 3l2-2l3 3.500z" fill="#d6d6d6"/></svg>
<svg style="left:1618.5px;top:641px;" width="14" height="14" viewBox="0 0 14 14"><circle cx="7" cy="7" r="6" fill="none" stroke="#d6d6d6" stroke-width="1.500"/><path d="M2.800 11.200a6 6 0 0 0 8.400-8.400z" fill="#d6d6d6"/></svg>
<svg style="left:1648.5px;top:641.5px;" width="14" height="13" viewBox="0 0 17 16"><path d="M0.300 0.300h16.400v4.300h-1.500v-2.300h-4.900v11.600h2.400v1.800h-8.400v-1.800h2.400V2.300h-4.900v2.300H0.300z" fill="#d6d6d6"/></svg>
<svg style="left:1678.5px;top:640.5px;" width="15" height="15" viewBox="0 0 15 15"><rect x="2.500" y="2.500" width="10" height="10" fill="none" stroke="#d6d6d6" stroke-width="1.500"/><rect x="0.500" y="0.500" width="3.600" height="3.600" fill="#535353" stroke="#d6d6d6" stroke-width="1"/><rect x="10.900" y="0.500" width="3.600" height="3.600" fill="#535353" stroke="#d6d6d6" stroke-width="1"/><rect x="0.500" y="10.900" width="3.600" height="3.600" fill="#535353" stroke="#d6d6d6" stroke-width="1"/><rect x="10.900" y="10.900" width="3.600" height="3.600" fill="#535353" stroke="#d6d6d6" stroke-width="1"/></svg>
<svg style="left:1710.5px;top:641px;" width="13" height="15" viewBox="0 0 13 15"><path d="M3.800 0.700h5l3.500 3.500v10h-8.500z" fill="none" stroke="#d6d6d6" stroke-width="1.400"/><path d="M8.500 0.700v3.800h3.800" fill="none" stroke="#d6d6d6" stroke-width="1.100"/><rect x="0" y="7.500" width="7.500" height="7" fill="#d6d6d6"/></svg>
<div style="left:1746px;top:641px;width:9px;height:19px;background:#454545;border-radius:4.500px;"></div>
<div style="left:1745.5px;top:637.5px;width:10.0px;height:10.0px;background:#dcdcdc;border-radius:50%;"></div>
<div style="left:1456px;top:665px;width:464px;height:1px;background:#444;"></div>
<div style="left:1461px;top:674px;width:145px;height:25px;background:#454545;border:1px solid #626262;border-radius:3px;"></div>
<div class="t" style="left:1470px;top:675.5px;font-size:14.5px;line-height:20px;color:#f0f0f0;">正常</div>
<svg style="left:1593.0px;top:684.0px;" width="9.0" height="7.0" viewBox="0 0 9.0 7.0"><path d="M1 1.5l3.5 3.5l3.5 -3.5" fill="none" stroke="#c8c8c8" stroke-width="1.3"/></svg>
<div class="t" style="left:1616px;top:673.5px;font-size:14.5px;line-height:20px;color:#d4d4d4;">不透明度:</div>
<div style="left:1687px;top:674px;width:67px;height:22px;background:#454545;border:1px solid #626262;border-radius:3px;"></div>
<div style="left:1735px;top:675px;width:1px;height:20px;background:#626262;"></div>
<svg style="left:1740.0px;top:682.5px;" width="9.0" height="7.0" viewBox="0 0 9.0 7.0"><path d="M1 1.5l3.5 3.5l3.5 -3.5" fill="none" stroke="#c8c8c8" stroke-width="1.3"/></svg>
<div class="t" style="left:1690.5px;top:675.5px;font-size:13px;line-height:18px;color:#f0f0f0;">100%</div>
<div style="left:1456px;top:701px;width:464px;height:1px;background:#444;"></div>
<div class="t" style="left:1464px;top:710.0px;font-size:14px;line-height:20px;color:#d4d4d4;">统一:</div>
<svg style="left:1506px;top:711px;" width="16" height="15" viewBox="0 0 16 15"><path d="M8 0.300l5.200 5.200l-1.700 0.600l-2.300 2.800l0.500 2.900l-1.700 1l-6.800-6.800l1.100-1.700l2.900 0.500l2.700-2.500z" fill="#d6d6d6"/><path d="M4.500 9.500l-4 4.500" fill="none" stroke="#d6d6d6" stroke-width="1.500"/></svg>
<svg style="left:1515px;top:722.5px;" width="11" height="7" viewBox="0 0 11 7"><rect x="0.700" y="0.700" width="6" height="5" rx="2.500" fill="#535353" stroke="#d6d6d6" stroke-width="1.300"/><rect x="4.300" y="0.700" width="6" height="5" rx="2.500" fill="none" stroke="#d6d6d6" stroke-width="1.300"/><path d="M3.500 3.200h4" stroke="#d6d6d6" stroke-width="1.300"/></svg>
<svg style="left:1533px;top:712.5px;" width="16" height="11" viewBox="0 0 16 11"><path d="M0.500 5.500q7.500-9 15 0q-7.500 9-15 0z" fill="#d6d6d6"/><circle cx="8" cy="5.300" r="3.300" fill="#535353"/><circle cx="8" cy="5.300" r="1.900" fill="#d6d6d6"/></svg>
<svg style="left:1542px;top:722.5px;" width="11" height="7" viewBox="0 0 11 7"><rect x="0.700" y="0.700" width="6" height="5" rx="2.500" fill="#535353" stroke="#d6d6d6" stroke-width="1.300"/><rect x="4.300" y="0.700" width="6" height="5" rx="2.500" fill="none" stroke="#d6d6d6" stroke-width="1.300"/><path d="M3.500 3.200h4" stroke="#d6d6d6" stroke-width="1.300"/></svg>
<div class="t" style="left:1562px;top:706.5px;font-size:17px;line-height:24px;color:#d6d6d6;font-style:italic;letter-spacing:-1px;">fx</div>
<svg style="left:1570px;top:722.5px;" width="11" height="7" viewBox="0 0 11 7"><rect x="0.700" y="0.700" width="6" height="5" rx="2.500" fill="#535353" stroke="#d6d6d6" stroke-width="1.300"/><rect x="4.300" y="0.700" width="6" height="5" rx="2.500" fill="none" stroke="#d6d6d6" stroke-width="1.300"/><path d="M3.500 3.200h4" stroke="#d6d6d6" stroke-width="1.300"/></svg>
<div style="left:1667.5px;top:714px;width:13.5px;height:13.5px;background:#dedede;border-radius:2.500px;"></div>
<svg style="left:1669.5px;top:716.5px;" width="10" height="9" viewBox="0 0 10 9"><path d="M1 4.500l3 3l5-6.500" fill="none" stroke="#2a2a2a" stroke-width="2"/></svg>
<div class="t" style="left:1690px;top:710.0px;font-size:14.5px;line-height:20px;color:#e6e6e6;letter-spacing:0.500px;">传播帧 1</div>
<div style="left:1456px;top:737px;width:464px;height:1px;background:#444;"></div>
<div class="t" style="left:1464px;top:745.5px;font-size:14px;line-height:20px;color:#d4d4d4;">锁定:</div>
<svg style="left:1511.5px;top:750.5px;" width="13" height="13" viewBox="0 0 13 13"><rect x="0.0" y="0.0" width="4.300" height="4.300" fill="#8e8e8e"/><rect x="4.3" y="0.0" width="4.300" height="4.300" fill="#5e5e5e"/><rect x="8.6" y="0.0" width="4.300" height="4.300" fill="#8e8e8e"/><rect x="0.0" y="4.3" width="4.300" height="4.300" fill="#5e5e5e"/><rect x="4.3" y="4.3" width="4.300" height="4.300" fill="#8e8e8e"/><rect x="8.6" y="4.3" width="4.300" height="4.300" fill="#5e5e5e"/><rect x="0.0" y="8.6" width="4.300" height="4.300" fill="#8e8e8e"/><rect x="4.3" y="8.6" width="4.300" height="4.300" fill="#5e5e5e"/><rect x="8.6" y="8.6" width="4.300" height="4.300" fill="#8e8e8e"/></svg>
<svg style="left:1540px;top:748px;" width="15" height="16" viewBox="0 0 15 16"><path d="M14.500 0.300q-1 5-5.500 9.500l-2.300-2q3.800-5.300 7.800-7.500z" fill="#8f8f8f"/><path d="M6 8.700l2.400 2q-1.200 4-7.400 4.500q2.500-1.600 2.600-3.600q0.100-2.300 2.400-2.900z" fill="#8f8f8f"/></svg>
<svg style="left:1564.5px;top:748.5px;" width="16" height="16" viewBox="0 0 16 16"><path d="M8 1.500v13M1.500 8h13" fill="none" stroke="#d6d6d6" stroke-width="1.400"/><path d="M8 0l2.600 3.200h-5.200zM8 16l2.600-3.200h-5.200zM0 8l3.200-2.600v5.200zM16 8l-3.200-2.600v5.200z" fill="#d6d6d6"/></svg>
<svg style="left:1592px;top:748.5px;" width="17" height="16" viewBox="0 0 17 16"><path d="M3.500 3.500h7.500l3 3v6h-10.500z" fill="none" stroke="#d6d6d6" stroke-width="1.400"/><path d="M11 3.500v3h3" fill="none" stroke="#d6d6d6" stroke-width="1.100"/><path d="M0 3.500h2M3.500 0v2M15.500 12.500h1.500M14 14v2M3.500 14v2M0 12.500h2M14 0v2M15.500 3.500h1.500" fill="none" stroke="#d6d6d6" stroke-width="1.300"/></svg>
<svg style="left:1622px;top:748.5px;" width="12" height="15" viewBox="0 0 12 15"><path d="M3 6.500v-2.500a3 3 0 0 1 6 0v2.500" fill="none" stroke="#d6d6d6" stroke-width="1.700"/><rect x="0" y="6.500" width="12" height="8" rx="1" fill="#d6d6d6"/><circle cx="6" cy="10.300" r="1.300" fill="#535353"/></svg>
<div class="t" style="left:1646px;top:745.5px;font-size:14.5px;line-height:20px;color:#d4d4d4;">填充:</div>
<div style="left:1687px;top:746px;width:67px;height:22px;background:#454545;border:1px solid #626262;border-radius:3px;"></div>
<div style="left:1735px;top:747px;width:1px;height:20px;background:#626262;"></div>
<svg style="left:1740.0px;top:754.5px;" width="9.0" height="7.0" viewBox="0 0 9.0 7.0"><path d="M1 1.5l3.5 3.5l3.5 -3.5" fill="none" stroke="#c8c8c8" stroke-width="1.3"/></svg>
<div class="t" style="left:1690.5px;top:747.5px;font-size:13px;line-height:18px;color:#f0f0f0;">100%</div>
<div style="left:1456px;top:775px;width:444px;height:222px;background:#535353;"></div>
<div style="left:1494px;top:775px;width:405px;height:49px;background:#6b6b6b;"></div>
<div style="left:1456px;top:824.5px;width:443px;height:1.0px;background:#454545;"></div>
<svg style="left:1465.5px;top:795.0px;" width="18" height="11" viewBox="0 0 18 11"><path d="M0.500 5.500q8.500-9.500 17 0q-8.500 9.500-17 0z" fill="#e8e8e8"/><circle cx="9" cy="5.500" r="3.300" fill="#535353"/><circle cx="9" cy="5.500" r="1.700" fill="#e8e8e8"/></svg>
<svg style="left:1496px;top:778px;" width="45" height="45" viewBox="0 0 45 45"><path d="M0.700 15v-14.300h14M30 0.700h14.300v14.300M44.300 30v14.300h-14.300M15 44.300h-14.300v-14.300" fill="none" stroke="#f0f0f0" stroke-width="1.300"/></svg>
<svg style="left:1509.5px;top:791.5px;" width="18" height="17" viewBox="0 0 17 16"><path d="M0.300 0.300h16.400v4.300h-1.500v-2.300h-4.900v11.600h2.400v1.800h-8.400v-1.800h2.400V2.300h-4.900v2.300H0.300z" fill="#f0f0f0"/></svg>
<div class="t" style="left:1551px;top:790.5px;font-size:13.5px;line-height:19px;color:#f0f0f0;">go</div>
<div style="left:1456px;top:875.5px;width:443px;height:1.0px;background:#454545;"></div>
<div style="left:1467.5px;top:844.5px;width:15.0px;height:15.0px;border:1px solid #474747;border-right-color:#5e5e5e;border-bottom-color:#5e5e5e;"></div>
<svg style="left:1509.5px;top:843.8px;" width="18" height="17" viewBox="0 0 17 16"><path d="M0.300 0.300h16.400v4.300h-1.500v-2.300h-4.900v11.600h2.400v1.800h-8.400v-1.800h2.400V2.300h-4.900v2.300H0.300z" fill="#d6d6d6"/></svg>
<div class="t" style="left:1551px;top:842.5px;font-size:13.5px;line-height:19px;color:#f0f0f0;">1</div>
<div style="left:1456px;top:926.5px;width:443px;height:1.0px;background:#454545;"></div>
<div style="left:1467.5px;top:895.5px;width:15.0px;height:15.0px;border:1px solid #474747;border-right-color:#5e5e5e;border-bottom-color:#5e5e5e;"></div>
<svg style="left:1509.5px;top:894.8px;" width="18" height="17" viewBox="0 0 17 16"><path d="M0.300 0.300h16.400v4.300h-1.500v-2.300h-4.900v11.600h2.400v1.800h-8.400v-1.800h2.400V2.300h-4.900v2.300H0.300z" fill="#d6d6d6"/></svg>
<div class="t" style="left:1551px;top:893.5px;font-size:13.5px;line-height:19px;color:#f0f0f0;">2</div>
<div style="left:1456px;top:977.5px;width:443px;height:1.0px;background:#454545;"></div>
<div style="left:1467.5px;top:946.5px;width:15.0px;height:15.0px;border:1px solid #474747;border-right-color:#5e5e5e;border-bottom-color:#5e5e5e;"></div>
<svg style="left:1509.5px;top:945.8px;" width="18" height="17" viewBox="0 0 17 16"><path d="M0.300 0.300h16.400v4.300h-1.500v-2.300h-4.900v11.600h2.400v1.800h-8.400v-1.800h2.400V2.300h-4.900v2.300H0.300z" fill="#d6d6d6"/></svg>
<div class="t" style="left:1551px;top:944.5px;font-size:13.5px;line-height:19px;color:#f0f0f0;">3</div>
<div style="left:1493.5px;top:775px;width:1.0px;height:222px;background:#454545;"></div>
<div style="left:1456px;top:996.5px;width:464px;height:1.0px;background:#444;"></div>
<div style="left:1900px;top:775px;width:20px;height:222px;background:#4a4a4a;"></div>
<div style="left:1902px;top:796px;width:14px;height:63px;background:#6b6b6b;"></div>
<svg style="left:1904.5px;top:784.5px;" width="11" height="6" viewBox="0 0 11 6"><path d="M1 5l4.500-4l4.500 4" fill="none" stroke="#8c8c8c" stroke-width="1.200"/></svg>
<div style="left:1909px;top:936px;width:15px;height:73px;background:#1f2a33;border:1px solid #5a6a78;border-radius:3px;"><div style="left:4px;top:6.0px;width:4px;height:1.5px;background:#2f6fa8;"></div>
<div style="left:4px;top:8.9px;width:4px;height:1.5px;background:#2f6fa8;"></div>
<div style="left:4px;top:11.8px;width:4px;height:1.5px;background:#2f6fa8;"></div>
<div style="left:4px;top:14.7px;width:4px;height:1.5px;background:#2f6fa8;"></div>
<div style="left:4px;top:17.6px;width:4px;height:1.5px;background:#2f6fa8;"></div>
<div style="left:4px;top:20.5px;width:4px;height:1.5px;background:#2f6fa8;"></div>
<div style="left:4px;top:23.4px;width:4px;height:1.5px;background:#2f6fa8;"></div>
<div style="left:4px;top:26.3px;width:4px;height:1.5px;background:#2f6fa8;"></div>
<div style="left:4px;top:29.2px;width:4px;height:1.5px;background:#2f6fa8;"></div>
<div style="left:4px;top:32.099999999999994px;width:4px;height:1.5px;background:#2f6fa8;"></div>
<div style="left:4px;top:35.0px;width:4px;height:1.5px;background:#2f6fa8;"></div>
<div style="left:4px;top:37.9px;width:4px;height:1.5px;background:#2f6fa8;"></div>
<div style="left:4px;top:40.8px;width:4px;height:1.5px;background:#2f6fa8;"></div>
<div style="left:4px;top:43.699999999999996px;width:4px;height:1.5px;background:#2f6fa8;"></div>
<div style="left:4px;top:46.6px;width:4px;height:1.5px;background:#3aa0e8;"></div>
<div style="left:4px;top:49.5px;width:4px;height:1.5px;background:#3aa0e8;"></div>
<div style="left:4px;top:52.4px;width:4px;height:1.5px;background:#3aa0e8;"></div>
<div style="left:4px;top:55.3px;width:4px;height:1.5px;background:#3aa0e8;"></div>
<div style="left:4px;top:58.199999999999996px;width:4px;height:1.5px;background:#3aa0e8;"></div>
<div style="left:4px;top:61.1px;width:4px;height:1.5px;background:#3aa0e8;"></div>
<div style="left:4px;top:64.0px;width:4px;height:1.5px;background:#3aa0e8;"></div>
<div style="left:4px;top:66.9px;width:4px;height:1.5px;background:#3aa0e8;"></div>
</div>
<svg style="left:1665.5px;top:1008.5px;" width="18" height="9" viewBox="0 0 18 9"><rect x="0.800" y="0.800" width="9.400" height="7.400" rx="3.700" fill="none" stroke="#8e8e8e" stroke-width="1.500"/><rect x="7.800" y="0.800" width="9.400" height="7.400" rx="3.700" fill="none" stroke="#8e8e8e" stroke-width="1.500"/></svg>
<div class="t" style="left:1701px;top:999.5px;font-size:18px;line-height:25px;color:#c4c4c4;font-style:italic;letter-spacing:-1px;">fx</div>
<svg style="left:1716px;top:1020px;" width="4" height="3" viewBox="0 0 4 3"><path d="M0 0h4l-2 2.500z" fill="#c4c4c4"/></svg>
<svg style="left:1733.5px;top:1007.5px;" width="17" height="12" viewBox="0 0 17 12"><rect x="0" y="0" width="17" height="12" fill="#c4c4c4"/><circle cx="8.500" cy="6" r="3.600" fill="#535353"/></svg>
<svg style="left:1768.5px;top:1006.5px;" width="14" height="14" viewBox="0 0 14 14"><circle cx="7" cy="7" r="6" fill="none" stroke="#c4c4c4" stroke-width="1.500"/><path d="M2.800 11.200a6 6 0 0 0 8.400-8.400z" fill="#c4c4c4"/></svg>
<svg style="left:1784px;top:1020px;" width="4" height="3" viewBox="0 0 4 3"><path d="M0 0h4l-2 2.500z" fill="#c4c4c4"/></svg>
<svg style="left:1801.5px;top:1007px;" width="16" height="13" viewBox="0 0 16 13"><path d="M0 1.500h6l1.500 1.700h8.500v9.800h-16z" fill="#c4c4c4"/></svg>
<svg style="left:1836.5px;top:1006.5px;" width="13" height="13" viewBox="0 0 13 13"><path d="M1 1h11v11h-6.500l-4.500-4.500z" fill="none" stroke="#c4c4c4" stroke-width="1.600"/><path d="M1 7.500h4.500v4.500" fill="none" stroke="#c4c4c4" stroke-width="1.300"/></svg>
<svg style="left:1870px;top:1005.5px;" width="13" height="15" viewBox="0 0 13 15"><path d="M0 2.800h13" stroke="#c4c4c4" stroke-width="1.600"/><path d="M4 2.500v-1.700h5v1.700" fill="none" stroke="#c4c4c4" stroke-width="1.300"/><path d="M1.500 4.500h10v9.700h-10z" fill="none" stroke="#c4c4c4" stroke-width="1.500"/><path d="M4.300 6.500v6M6.500 6.500v6M8.700 6.500v6" stroke="#c4c4c4" stroke-width="1.100"/></svg>
<svg style="left:0;top:0;pointer-events:none" width="1920" height="1080"><path d="M1647.5 848L1595.0 814.9" stroke="#ff1414" stroke-width="3" stroke-linecap="round"/><polygon points="1584.0,808.0 1601.8,811.6 1594.9,822.6" fill="#ff1414"/></svg>
<!-- p_task -->
<div style="left:0px;top:1028px;width:1920px;height:2px;background:#3a3a3a;"></div>
<div style="left:0px;top:1030px;width:1920px;height:50px;background:#2b2b2b;background:linear-gradient(90deg,#161616 0,#222 6%,#2e2e2e 20%,#2f2f2f 50%,#2e2e2e 65%,#3a2b2b 72%,#3b2727 76%,#2e2424 82%,#1e1c1c 88%,#141414 94%,#1a1a1a 100%);"></div>
<svg style="left:20px;top:1045px;" width="20" height="20" viewBox="0 0 20 20"><path d="M0 2.800l8.200-1.100v7.800h-8.200zM9.200 1.500l10.800-1.500v9.500h-10.800zM0 10.500h8.200v7.800l-8.200-1.100zM9.200 10.500h10.800v9.500l-10.800-1.500z" fill="#fff"/></svg>
<div style="left:60px;top:1033px;width:205px;height:43px;background:#ececec;"></div>
<svg style="left:67px;top:1042px;" width="25" height="26" viewBox="0 0 25 26"><path d="M12.500 5a8.300 8.300 0 1 0 7.800 11.300h-4.300a4.400 4.400 0 0 1-7.700-1.600h12.400a8.300 8.300 0 0 0-8.200-9.700zM8.200 11.200a4.400 4.400 0 0 1 8.500 0z" fill="#2f8fe6"/><path d="M21.500 6.500q3-5-0.500-6q-3.500-0.500-9 3.500q5.500-2.800 8-1.800q1.600 0.800 0.300 3.800zM5.500 13.500q-6 7.500-4 10.800q2.500 2.700 9-1q-5.500 2-7-0.200q-1-2.300 3.500-8z" fill="#49a6f0"/></svg>
<svg style="left:94.5px;top:1051.5px;" width="7" height="5" viewBox="0 0 7 5"><path d="M0 5h7l-3.500-5z" fill="#9a9a9a"/></svg>
<div class="t" style="left:110px;top:1044.0px;font-size:15px;line-height:21px;color:#1c1c1c;">影视特效</div>
<div style="left:265px;top:1033px;width:70px;height:43px;background:#2a8bfd;"></div>
<div class="t" style="left:270px;top:1044.0px;font-size:15px;line-height:21px;color:#fff;">搜索一下</div>
<svg style="left:357.5px;top:1046px;" width="27" height="18" viewBox="0 0 27 18"><rect x="0" y="0" width="27" height="17.500" fill="#5db5f0"/><rect x="1" y="1" width="25" height="14" fill="#a6d8f8"/><circle cx="8" cy="8" r="5" fill="#e8f3fb"/><path d="M8 8v-5a5 5 0 0 1 5 5z" fill="#f2a93b"/><rect x="16" y="3" width="8" height="2.200" fill="#e8f3fb"/><rect x="16" y="6.800" width="8" height="2.200" fill="#e8f3fb"/><rect x="16" y="10.500" width="8" height="2.200" fill="#e8f3fb"/><rect x="3" y="14.800" width="9" height="1.300" fill="#f2a93b"/><rect x="13" y="14.800" width="10" height="1.300" fill="#2d7fd0"/></svg>
<svg style="left:420.5px;top:1041.5px;" width="25" height="27" viewBox="0 0 25 27"><path d="M0.500 12.500q1-11 12-12q11.500 0.500 12 13.500v2.500h-16q0.500 5.500 7 5.500q4.500 0 7.800-2v5q-4 2-9 2q-10.500-0.500-10.800-10q0.300-5.500 5.300-8.300q-2 2.200-2.300 4.800h9.800q-0.200-5-5.300-5.200q-5.500 0-10.500 3.700z" fill="#1f7fd8"/></svg>
<svg style="left:481px;top:1040.5px;" width="29" height="29" viewBox="0 0 29 29"><circle cx="14" cy="15" r="13.200" fill="#f4f4f4"/><circle cx="14" cy="15" r="11.500" fill="#6cc72a"/><path d="M14 8a7 7 0 1 0 6.600 9.300h-3.400a4 4 0 0 1-7.200-1h11a7 7 0 0 0-7-8.300zM10 13.200a4 4 0 0 1 7.700 0z" fill="#fff"/><path d="M5 27q-4-9 6-20q7-6 14-6.500q-7 2.500-12 7.500q-8 9-8 19z" fill="#58b81e"/></svg>
<div style="left:470px;top:1077px;width:51px;height:3px;background:#76b9ed;"></div>
<div style="left:527px;top:1030px;width:61px;height:50px;background:#5c5c5c;"></div>
<div style="left:527px;top:1077px;width:61px;height:3px;background:#76b9ed;"></div>
<div style="left:543px;top:1040.5px;width:27.5px;height:26.0px;background:#001e26;border:2px solid #26c9ff;"><div class="t" style="left:0;top:0;width:23.500px;height:22px;line-height:21px;text-align:center;font-size:17.500px;font-weight:normal;color:#26c9ff;letter-spacing:-0.300px;-webkit-text-stroke:0.400px #26c9ff;">Ps</div></div>
<div class="t" style="left:1310px;width:200px;text-align:center;top:1034.5px;font-size:15.5px;line-height:22px;color:#fff;">48℃</div>
<div class="t" style="left:1311px;width:200px;text-align:center;top:1055.5px;font-size:14.5px;line-height:20px;color:#fff;">CPU温度</div>
<svg style="left:1465px;top:1050px;" width="16" height="10" viewBox="0 0 16 10"><path d="M0.800 9l7.200-7.500l7.200 7.500" fill="none" stroke="#fff" stroke-width="1.400"/></svg>
<svg style="left:1492px;top:1044px;" width="22" height="22" viewBox="0 0 22 22"><path d="M2 3.500l17-2.500v16l-17-2.500z" fill="none" stroke="#e8e8e8" stroke-width="1.300"/><path d="M6 7.500h9v7h-9z" fill="#bdbdbd"/><path d="M8 7.500v-1.500a2.500 2.500 0 0 1 5 0v1.500" fill="none" stroke="#bdbdbd" stroke-width="1.400"/><circle cx="15.500" cy="16" r="5.300" fill="#e81123"/><rect x="14.800" y="12.800" width="1.500" height="4" fill="#fff"/><rect x="14.800" y="17.800" width="1.500" height="1.500" fill="#fff"/></svg>
<svg style="left:1523px;top:1045px;" width="20" height="20" viewBox="0 0 20 20"><circle cx="10" cy="10" r="10" fill="#f3e01c"/><path d="M0.300 8q2.500-8 10-8q7 0.300 9.300 6.500q-3-3.500-7.500-3q-4 0.500-6 3.500q-2.500 3.500-5.800 1zM19.700 12q-2.500 8-10 8q-7-0.300-9.300-6.500q3 3.500 7.500 3q4-0.500 6-3.500q2.500-3.500 5.800-1z" fill="#38a832"/><path d="M10 5.500v9M5.500 10h9" stroke="#2f9a2c" stroke-width="2"/></svg>
<svg style="left:1552.5px;top:1048px;" width="21" height="14" viewBox="0 0 21 14"><rect x="4.500" y="2.300" width="15" height="10" fill="#fff" stroke="#fff" stroke-width="1"/><rect x="20" y="5" width="1.300" height="4.500" fill="#fff"/><path d="M1.300 0v2.500M3.800 0v2.500" stroke="#fff" stroke-width="1"/><path d="M0.300 2.500h4.500v2q0 2-2.200 2t-2.300-2z" fill="#fff"/><path d="M2.500 6.500v3.500h2" fill="none" stroke="#fff" stroke-width="1"/></svg>
<svg style="left:1584px;top:1045.5px;" width="18" height="17" viewBox="0 0 18 17"><circle cx="15" cy="14.700" r="1.700" fill="#fff"/><path d="M10.500 15a5 5 0 0 1 5-5" fill="none" stroke="#fff" stroke-width="1.300"/><path d="M6.500 15.500a9 9 0 0 1 9-9.500" fill="none" stroke="#fff" stroke-width="1.300"/><path d="M2.500 16a13.500 13.500 0 0 1 13-14" fill="none" stroke="#c8c8c8" stroke-width="1.300"/></svg>
<svg style="left:1612px;top:1046px;" width="22" height="18" viewBox="0 0 22 18"><path d="M1 6h3.500l4.500-4.500v15l-4.500-4.500h-3.500z" fill="none" stroke="#fff" stroke-width="1.300"/><path d="M11.500 6.500q2 2.500 0 5" fill="none" stroke="#fff" stroke-width="1.200"/><path d="M14 4q3.500 5 0 10" fill="none" stroke="#e0e0e0" stroke-width="1.200"/><path d="M17 1.500q5 7.500 0 15" fill="none" stroke="#8a8a8a" stroke-width="1.200"/></svg>
<div class="t" style="left:1552.5px;width:200px;text-align:center;top:1042.0px;font-size:18.5px;line-height:26px;color:#fff;">中</div>
<div style="left:1678.5px;top:1046px;width:18.5px;height:18.5px;background:#fff;"><div class="t" style="left:0;top:0;width:18.500px;height:18.500px;line-height:18px;text-align:center;font-size:15.500px;color:#000;font-weight:500;">拼</div></div>
<div class="t" style="left:1657px;width:200px;text-align:center;top:1033.5px;font-size:15.6px;line-height:22px;color:#fff;">23:03 周四</div>
<div class="t" style="left:1657px;width:200px;text-align:center;top:1053.0px;font-size:16.7px;line-height:23px;color:#fff;">2021/11/25</div>
<svg style="left:1819px;top:1043.5px;" width="21" height="21" viewBox="0 0 21 21"><rect x="0.500" y="2.500" width="2" height="17" fill="#fff"/><rect x="3.500" y="0.500" width="17" height="20" fill="#fff"/><path d="M6.500 5.500h11M6.500 9h11M6.500 12.500h7" stroke="#1c1c1c" stroke-width="1.500"/></svg>
<div style="left:1831px;top:1054px;width:17px;height:16.5px;background:#e60012;border-radius:1.500px;"><div class="t" style="left:0;top:0;width:17px;line-height:16px;text-align:center;font-size:12.500px;color:#fff;">1</div></div>
<svg style="left:1868.5px;top:1044.5px;" width="21" height="22" viewBox="0 0 21 22"><path d="M0.500 0.500h20v17.500h-9.500l-4 4v-4h-6.500z" fill="#fff"/><path d="M4 5h13M4 9h13M4 13h13" stroke="#1c1c1c" stroke-width="1.400"/></svg>
<div style="left:1878px;top:1054px;width:21px;height:21px;background:#2c2c2c;border:1.500px solid #7a7a7a;border-radius:50%;"><div class="t" style="left:0;top:0;width:18px;line-height:17.500px;text-align:center;font-size:15px;font-weight:bold;color:#fff;">4</div></div>
<div style="left:1914.5px;top:1030px;width:1.0px;height:50px;background:#6a6a6a;"></div>
</body></html>
